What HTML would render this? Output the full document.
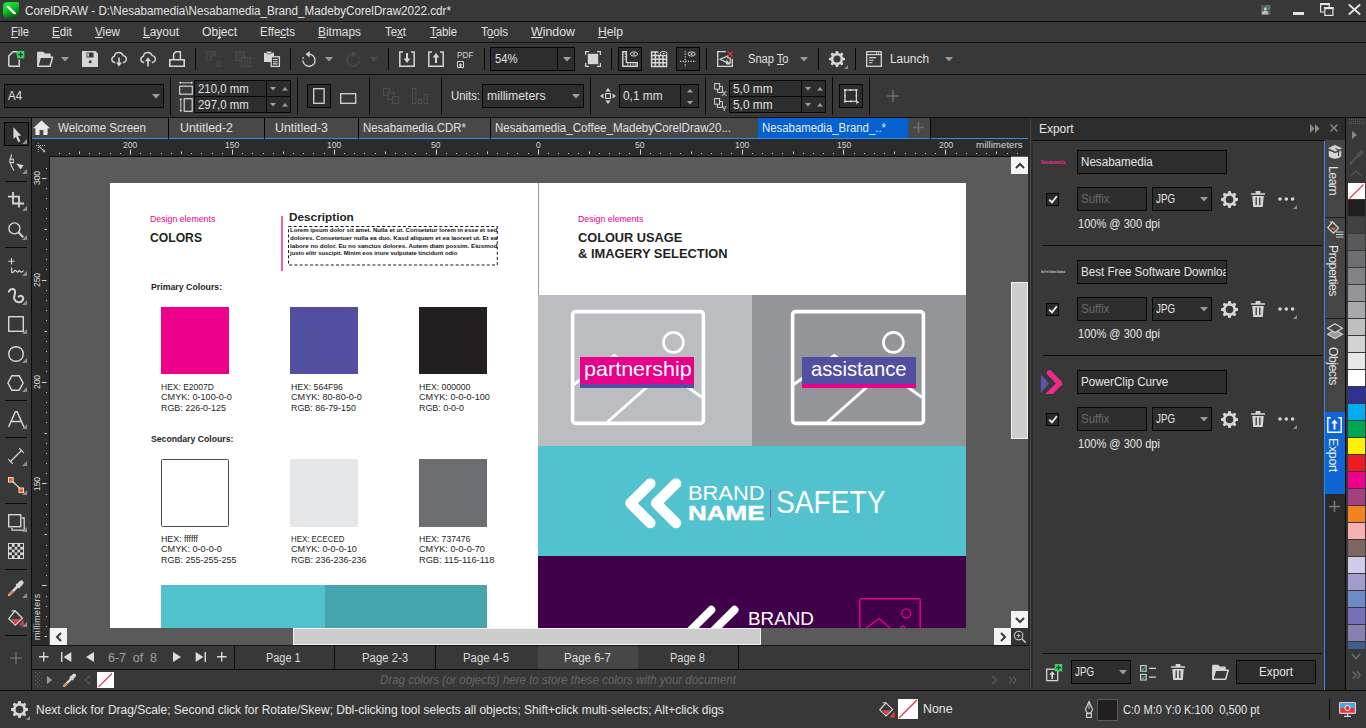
<!DOCTYPE html>
<html lang="en"><head><meta charset="utf-8"><title>CorelDRAW</title>
<style>
html,body{margin:0;padding:0;background:#383838;}
body{width:1366px;height:728px;position:relative;overflow:hidden;font-family:"Liberation Sans",sans-serif;font-size:12px;color:#dcdcdc;}
div,span.t,svg.i{position:absolute;box-sizing:content-box;}
span.t{white-space:pre;display:block;}
u{text-decoration:underline;text-underline-offset:1px;}
svg.i{overflow:visible;}
.clip{overflow:hidden;}
</style></head><body>
<div style="left:0px;top:0px;width:1366px;height:21px;background:#383838;"></div>
<div style="left:0px;top:21px;width:1366px;height:1px;background:#060606;"></div>
<svg class="i" style="left:3px;top:2px;" width="16" height="16" viewBox="0 0 16 16"><defs><linearGradient id="gi" x1="0.1" y1="0" x2="0.6" y2="1"><stop offset="0" stop-color="#10f23a"/><stop offset="0.45" stop-color="#12c82e"/><stop offset="1" stop-color="#035c10"/></linearGradient></defs>
<path d="M4.500 0H15Q16 0 16 1V10.500Q16 16 10.500 16H4Q0 16 0 12V4.500Q0 0 4.500 0Z" fill="url(#gi)"/>
<path d="M4.600 3.400L13 11.400" stroke="#0a5a16" stroke-width="2.600" stroke-linecap="round" opacity="0.550" transform="translate(0.300 1)"/>
<path d="M4 3.800L12 11.600" stroke="#f6fff6" stroke-width="2.500" stroke-linecap="butt"/><path d="M12.700 12.400L11.300 10.800L12.800 11L13.300 12.600Z" fill="#e0f0e0"/></svg>
<span class="t" style="left:24.5px;top:3.5px;font-size:12px;line-height:15px;color:#e4e4e4;transform-origin:0 50%;transform:scaleX(0.9717);">CorelDRAW - D:\Nesabamedia\Nesabamedia_Brand_MadebyCorelDraw2022.cdr*</span>
<svg class="i" style="left:1261px;top:4.8px;" width="9.5" height="9.5" viewBox="0 0 9.5 9.5"><rect x="0" y="0" width="9.500" height="9.500" fill="#5a5a5a"/><circle cx="4.200" cy="3.800" r="1.500" fill="#c8c8c8"/><path d="M0.800 9.500C0.800 6.400 2.600 5.600 4.200 5.600C5.800 5.600 7.600 6.400 7.600 9.500Z" fill="#bdbdbd"/><circle cx="7" cy="2.300" r="1.700" fill="none" stroke="#22c55e" stroke-width="0.900"/></svg>
<div style="left:1293px;top:12px;width:11px;height:3.2px;background:#e4e4e4;"></div>
<svg class="i" style="left:1320px;top:3px;" width="13.5" height="13" viewBox="0 0 13.5 13"><path d="M0.600 0.600H9.200V4.200M4.200 9H0.600V0.600" fill="none" stroke="#e4e4e4" stroke-width="1.200"/><path d="M0 1.100H9.800" stroke="#e4e4e4" stroke-width="2"/><rect x="4.800" y="4.600" width="8.100" height="7.800" fill="#383838" stroke="#e4e4e4" stroke-width="1.200"/><path d="M4.200 5.200H13.500" stroke="#e4e4e4" stroke-width="2"/></svg>
<svg class="i" style="left:1348px;top:4px;" width="13" height="11" viewBox="0 0 13 11"><path d="M0.800 0.500L12.200 10.500M12.200 0.500L0.800 10.500" stroke="#e4e4e4" stroke-width="1.800" fill="none"/></svg>
<div style="left:0px;top:22px;width:1366px;height:20px;background:#383838;"></div>
<div style="left:0px;top:42px;width:1366px;height:1px;background:#101010;"></div>
<span class="t" style="left:11px;top:24.5px;font-size:12px;line-height:15px;color:#e0e0e0;transform-origin:0 50%;transform:scaleX(0.9310);">File</span>
<div style="left:11.0px;top:37px;width:6.8px;height:1px;background:#e0e0e0;"></div>
<span class="t" style="left:52px;top:24.5px;font-size:12px;line-height:15px;color:#e0e0e0;transform-origin:0 50%;transform:scaleX(0.9672);">Edit</span>
<div style="left:52.0px;top:37px;width:7.7px;height:1px;background:#e0e0e0;"></div>
<span class="t" style="left:95px;top:24.5px;font-size:12px;line-height:15px;color:#e0e0e0;transform-origin:0 50%;transform:scaleX(0.9693);">View</span>
<div style="left:95.0px;top:37px;width:7.8px;height:1px;background:#e0e0e0;"></div>
<span class="t" style="left:143px;top:24.5px;font-size:12px;line-height:15px;color:#e0e0e0;transform-origin:0 50%;transform:scaleX(0.9993);">Layout</span>
<div style="left:143.0px;top:37px;width:6.7px;height:1px;background:#e0e0e0;"></div>
<span class="t" style="left:202px;top:24.5px;font-size:12px;line-height:15px;color:#e0e0e0;transform-origin:0 50%;transform:scaleX(1.0092);">Object</span>
<div style="left:218.2px;top:37px;width:2.7px;height:1px;background:#e0e0e0;"></div>
<span class="t" style="left:260px;top:24.5px;font-size:12px;line-height:15px;color:#e0e0e0;transform-origin:0 50%;transform:scaleX(0.9599);">Effects</span>
<div style="left:280.3px;top:37px;width:5.8px;height:1px;background:#e0e0e0;"></div>
<span class="t" style="left:318px;top:24.5px;font-size:12px;line-height:15px;color:#e0e0e0;transform-origin:0 50%;transform:scaleX(0.9920);">Bitmaps</span>
<div style="left:318.0px;top:37px;width:7.9px;height:1px;background:#e0e0e0;"></div>
<span class="t" style="left:385px;top:24.5px;font-size:12px;line-height:15px;color:#e0e0e0;transform-origin:0 50%;transform:scaleX(0.9542);">Text</span>
<div style="left:397.1px;top:37px;width:5.7px;height:1px;background:#e0e0e0;"></div>
<span class="t" style="left:430px;top:24.5px;font-size:12px;line-height:15px;color:#e0e0e0;transform-origin:0 50%;transform:scaleX(0.9412);">Table</span>
<div style="left:430.0px;top:37px;width:6.9px;height:1px;background:#e0e0e0;"></div>
<span class="t" style="left:481px;top:24.5px;font-size:12px;line-height:15px;color:#e0e0e0;transform-origin:0 50%;transform:scaleX(0.9639);">Tools</span>
<div style="left:488.1px;top:37px;width:6.4px;height:1px;background:#e0e0e0;"></div>
<span class="t" style="left:531px;top:24.5px;font-size:12px;line-height:15px;color:#e0e0e0;transform-origin:0 50%;transform:scaleX(1.0310);">Window</span>
<div style="left:531.0px;top:37px;width:11.7px;height:1px;background:#e0e0e0;"></div>
<span class="t" style="left:598px;top:24.5px;font-size:12px;line-height:15px;color:#e0e0e0;transform-origin:0 50%;transform:scaleX(1.0130);">Help</span>
<div style="left:598.0px;top:37px;width:8.8px;height:1px;background:#e0e0e0;"></div>
<div style="left:0px;top:43px;width:1366px;height:31px;background:#383838;"></div>
<div style="left:0px;top:74px;width:1366px;height:1px;background:#101010;"></div>
<svg class="i" style="left:8px;top:51px;" width="16" height="16" viewBox="0 0 16 16"><path d="M0.8 15.2V5L5 0.8H9.5V4.5M11.2 8.5V15.2H0.8" fill="none" stroke="#d6d6d6" stroke-width="1.5"/><rect x="9" y="0" width="7.300" height="7.300" fill="#35d268"/><path d="M12.650 1.300V6M10.300 3.650H15" stroke="#0c3d18" stroke-width="1.200"/></svg>
<svg class="i" style="left:37px;top:51px;" width="16" height="16" viewBox="0 0 16 16"><path d="M0.8 15V1.5H6L7.5 3.2H13V6" fill="#d6d6d6" stroke="#d6d6d6" stroke-width="1.4" stroke-linejoin="round"/><path d="M3.2 6.2H15.6L13 15.2H0.8Z" fill="#383838" stroke="#d6d6d6" stroke-width="1.5" stroke-linejoin="round"/></svg>
<svg class="i" style="left:61.0px;top:57.25px;" width="8" height="4.5" viewBox="0 0 8 4.5"><path d="M0 0H8L4.0 4.5Z" fill="#9a9a9a"/></svg>
<svg class="i" style="left:82px;top:51px;" width="16" height="16" viewBox="0 0 16 16"><path d="M0 0H13.5L16 2.5V16H0Z" fill="#d6d6d6"/><rect x="4.5" y="1.5" width="7" height="5" fill="#383838"/><rect x="5.3" y="2.2" width="1.6" height="3.4" fill="#d6d6d6"/><circle cx="8.2" cy="10.8" r="1.5" fill="#383838"/></svg>
<svg class="i" style="left:110.5px;top:51px;" width="16" height="16" viewBox="0 0 16 16"><path d="M4.2 11.5H3.6A3.1 3.1 0 0 1 3.3 5.4A4.6 4.6 0 0 1 12.2 4.6A3.5 3.5 0 0 1 12.6 11.5H11.8" fill="none" stroke="#d6d6d6" stroke-width="1.4"/><path d="M8 6.5V13" stroke="#d6d6d6" stroke-width="1.6"/><path d="M5 11.5H11L8 15.5Z" fill="#d6d6d6"/></svg>
<svg class="i" style="left:140px;top:51px;" width="16" height="16" viewBox="0 0 16 16"><path d="M4.2 11.5H3.6A3.1 3.1 0 0 1 3.3 5.4A4.6 4.6 0 0 1 12.2 4.6A3.5 3.5 0 0 1 12.6 11.5H11.8" fill="none" stroke="#d6d6d6" stroke-width="1.4"/><path d="M8 9V15.5" stroke="#d6d6d6" stroke-width="1.6"/><path d="M5 10.3H11L8 6.3Z" fill="#d6d6d6"/></svg>
<svg class="i" style="left:169px;top:51px;" width="16" height="16" viewBox="0 0 16 16"><path d="M4.600 9V3L6.600 0.800H11.400V9" fill="none" stroke="#d6d6d6" stroke-width="1.500"/><path d="M0.8 8.8H15.2V15.2H0.8Z" fill="none" stroke="#d6d6d6" stroke-width="1.6"/></svg>
<div style="left:195px;top:48px;width:1px;height:22px;background:#070707;"></div>
<svg class="i" style="left:206px;top:51px;" width="16" height="16" viewBox="0 0 16 16"><path d="M0.6 0.6H9V5H4.8V9H0.6Z M0.6 3H9" fill="none" stroke="#4b4b4b" stroke-width="1.1"/><path d="M10.5 10.5H15.4V15.4H10.5Z M12 12.5H14M12 14H14" fill="none" stroke="#4b4b4b" stroke-width="0.9"/></svg>
<svg class="i" style="left:235px;top:51px;" width="16" height="16" viewBox="0 0 16 16"><path d="M0.6 0.6H9.4V9.4H0.6Z" fill="none" stroke="#4b4b4b" stroke-width="1.1"/><path d="M2.5 3H7.5M2.5 5H7.5M2.5 7H7.5" stroke="#4b4b4b" stroke-width="0.8"/><path d="M6.6 6.6H15.4V15.4H6.6Z" fill="#383838" stroke="#4b4b4b" stroke-width="1.1"/><path d="M8.5 9H13.5M8.5 11H13.5M8.5 13H13.5" stroke="#4b4b4b" stroke-width="0.8"/></svg>
<svg class="i" style="left:264px;top:51px;" width="16" height="16" viewBox="0 0 16 16"><path d="M0 1.8H10V11H0Z" fill="#d6d6d6"/><rect x="2.5" y="0.3" width="5" height="2.6" rx="1" fill="#d6d6d6" stroke="#383838" stroke-width="0.6"/><rect x="7.2" y="5.8" width="8.2" height="9.6" fill="#383838" stroke="#d6d6d6" stroke-width="1.3"/><path d="M9 8.5H13.6M9 10.7H13.6M9 12.9H13.6" stroke="#d6d6d6" stroke-width="1.1"/></svg>
<div style="left:290px;top:48px;width:1px;height:22px;background:#070707;"></div>
<svg class="i" style="left:301px;top:51px;" width="16" height="16" viewBox="0 0 16 16"><path d="M8 3.2A6 6 0 1 1 2.3 11" fill="none" stroke="#d6d6d6" stroke-width="1.4"/><path d="M2.3 11A6 6 0 0 1 2.6 6" fill="none" stroke="#d6d6d6" stroke-width="1.4" stroke-dasharray="1.6 1.6"/><path d="M8.6 0V6.4L4.6 3.2Z" fill="#d6d6d6"/></svg>
<svg class="i" style="left:325.0px;top:57.25px;" width="8" height="4.5" viewBox="0 0 8 4.5"><path d="M0 0H8L4.0 4.5Z" fill="#9a9a9a"/></svg>
<svg class="i" style="left:345px;top:51px;" width="16" height="16" viewBox="0 0 16 16"><path d="M8 3.2A6 6 0 1 0 13.7 11" fill="none" stroke="#4b4b4b" stroke-width="1.4"/><path d="M13.7 11A6 6 0 0 0 13.4 6" fill="none" stroke="#4b4b4b" stroke-width="1.4" stroke-dasharray="1.6 1.6"/><path d="M7.4 0V6.4L11.4 3.2Z" fill="#4b4b4b"/></svg>
<svg class="i" style="left:370.0px;top:57.25px;" width="8" height="4.5" viewBox="0 0 8 4.5"><path d="M0 0H8L4.0 4.5Z" fill="#4e4e4e"/></svg>
<div style="left:388px;top:48px;width:1px;height:22px;background:#070707;"></div>
<svg class="i" style="left:399px;top:51px;" width="16" height="16" viewBox="0 0 16 16"><path d="M4 1H0.8V15.2H15.2V1H12" fill="none" stroke="#d6d6d6" stroke-width="1.5"/><path d="M8 2V9" stroke="#d6d6d6" stroke-width="2"/><path d="M4.6 7.6H11.4L8 12Z" fill="#d6d6d6"/></svg>
<svg class="i" style="left:428px;top:51px;" width="16" height="16" viewBox="0 0 16 16"><path d="M4 1H0.8V15.2H15.2V1H12" fill="none" stroke="#d6d6d6" stroke-width="1.5"/><path d="M8 5V12" stroke="#d6d6d6" stroke-width="2"/><path d="M4.6 6.4H11.4L8 2Z" fill="#d6d6d6"/></svg>
<span class="t" style="left:456.5px;top:50.8px;font-size:8.2px;line-height:10px;color:#d6d6d6;transform-origin:0 50%;transform:scaleX(1.0061);">PDF</span>
<svg class="i" style="left:457px;top:60.5px;" width="8" height="7" viewBox="0 0 8 7"><path d="M0.5 0.5H6.5V6.5H0.5Z" fill="none" stroke="#d6d6d6" stroke-width="1"/><path d="M3.5 2L1.6 4.4H2.8V6H4.2V4.4H5.4Z" fill="#d6d6d6"/></svg>
<div style="left:483.5px;top:48px;width:1px;height:22px;background:#070707;"></div>
<div style="left:490px;top:47px;width:83px;height:22px;background:#2d2d2d;border:1px solid #070707;"></div>
<div style="left:557px;top:48px;width:1px;height:22px;background:#070707;"></div>
<span class="t" style="left:494.5px;top:51.5px;font-size:12px;line-height:15px;color:#e0e0e0;transform-origin:0 50%;transform:scaleX(0.9368);">54%</span>
<svg class="i" style="left:562.5px;top:56.75px;" width="8" height="4.5" viewBox="0 0 8 4.5"><path d="M0 0H8L4.0 4.5Z" fill="#a0a0a0"/></svg>
<svg class="i" style="left:585px;top:51px;" width="16" height="16" viewBox="0 0 16 16"><path d="M0.6 4V0.6H4M12 0.6H15.4V4M15.4 12V15.4H12M4 15.4H0.6V12" fill="none" stroke="#d6d6d6" stroke-width="1.2"/><rect x="2.8" y="2.8" width="10.4" height="10.4" fill="#d6d6d6"/></svg>
<div style="left:611px;top:48px;width:1px;height:22px;background:#070707;"></div>
<div style="left:618px;top:47px;width:22px;height:22px;background:#2d2d2d;border:1px solid #050505;"></div>
<svg class="i" style="left:622px;top:51px;" width="16" height="16" viewBox="0 0 16 16"><path d="M0.8 0.8H4.4V11.6H15.2V15.2H0.8Z" fill="none" stroke="#d6d6d6" stroke-width="1.4"/><path d="M2.5 3H4M2.5 5.5H4M2.5 8H4M6 12.5V14M8.5 12.5V14M11 12.5V14M13.3 12.5V14" stroke="#d6d6d6" stroke-width="0.9"/><ellipse cx="12" cy="3" rx="3.6" ry="2.1" fill="none" stroke="#d6d6d6" stroke-width="1"/><circle cx="12" cy="3" r="0.9" fill="#d6d6d6"/></svg>
<svg class="i" style="left:651px;top:51px;" width="17" height="16" viewBox="0 0 17 16"><path d="M0 1H7.5M0 4.6H16M0 8.2H16M0 11.8H16M0 15.4H16M0.6 0.5V16M4.4 0.5V16M8.2 4.5V16M12 4.5V16M15.6 4.5V16" fill="none" stroke="#d6d6d6" stroke-width="1.5"/><ellipse cx="12.6" cy="2.6" rx="3.6" ry="2.1" fill="#383838" stroke="#d6d6d6" stroke-width="1"/><circle cx="12.6" cy="2.6" r="0.9" fill="#d6d6d6"/></svg>
<div style="left:676px;top:47px;width:22px;height:22px;background:#2d2d2d;border:1px solid #050505;"></div>
<svg class="i" style="left:680px;top:51px;" width="16" height="16" viewBox="0 0 16 16"><path d="M5.2 0V16" stroke="#d6d6d6" stroke-width="1.1" stroke-dasharray="1.2 1.4"/><path d="M0 10.4H16" stroke="#d6d6d6" stroke-width="1.1" stroke-dasharray="1.2 1.4"/><ellipse cx="11.6" cy="3" rx="3.6" ry="2.1" fill="none" stroke="#d6d6d6" stroke-width="1"/><circle cx="11.6" cy="3" r="0.9" fill="#d6d6d6"/></svg>
<div style="left:706px;top:48px;width:1px;height:22px;background:#070707;"></div>
<svg class="i" style="left:717px;top:51px;" width="17" height="16" viewBox="0 0 17 16"><path d="M9 0.7H0.7V15.3H15.3V8" fill="none" stroke="#d6d6d6" stroke-width="1.3"/><path d="M3.2 8.2L10.8 5V7H13.2V12.2H9.4V11.4Z" fill="none" stroke="#d6d6d6" stroke-width="1.2"/><path d="M9.4 8.4L13.4 13.4L9.4 13.4Z" fill="#d6d6d6"/><path d="M10.6 0.4L15.8 5.6M15.8 0.4L10.6 5.6" stroke="#e8323c" stroke-width="1.3"/></svg>
<span class="t" style="left:748px;top:51.5px;font-size:12px;line-height:15px;color:#e0e0e0;transform-origin:0 50%;transform:scaleX(0.9244);">Snap To</span>
<div style="left:777.0px;top:64px;width:6.8px;height:1px;background:#e0e0e0;"></div>
<svg class="i" style="left:799.5px;top:56.75px;" width="8" height="4.5" viewBox="0 0 8 4.5"><path d="M0 0H8L4.0 4.5Z" fill="#9a9a9a"/></svg>
<div style="left:818px;top:48px;width:1px;height:22px;background:#070707;"></div>
<svg class="i" style="left:829px;top:51px;" width="16" height="16" viewBox="0 0 16 16"><path d="M6.9 0H9.1L9.6 2.1L11 2.7L12.9 1.6L14.4 3.1L13.3 5L13.9 6.4L16 6.9V9.1L13.9 9.6L13.3 11L14.4 12.9L12.9 14.4L11 13.3L9.6 13.9L9.1 16H6.9L6.4 13.9L5 13.3L3.1 14.4L1.6 12.9L2.7 11L2.1 9.6L0 9.1V6.9L2.1 6.4L2.7 5L1.6 3.1L3.1 1.6L5 2.7L6.4 2.1Z" fill="#d6d6d6"/><circle cx="8" cy="8" r="3.6" fill="#383838"/></svg>
<svg class="i" style="left:843.5px;top:65px;" width="4" height="4" viewBox="0 0 4 4"><path d="M4 0V4H0Z" fill="#8a8a8a"/></svg>
<div style="left:855px;top:48px;width:1px;height:22px;background:#070707;"></div>
<svg class="i" style="left:866px;top:51px;" width="16" height="16" viewBox="0 0 16 16"><rect x="0.7" y="0.7" width="14.6" height="14.6" fill="none" stroke="#d6d6d6" stroke-width="1.3"/><path d="M0.7 3.6H15.3" stroke="#d6d6d6" stroke-width="1.2"/><path d="M3 6.6H10M3 9.2H7.6M3 11.8H6.4" stroke="#d6d6d6" stroke-width="1.1"/><path d="M10.6 1.4V3M12.4 1.4V3" stroke="#d6d6d6" stroke-width="0.8"/></svg>
<span class="t" style="left:890px;top:51.5px;font-size:12px;line-height:15px;color:#e0e0e0;transform-origin:0 50%;transform:scaleX(0.9907);">Launch</span>
<svg class="i" style="left:945.0px;top:56.75px;" width="8" height="4.5" viewBox="0 0 8 4.5"><path d="M0 0H8L4.0 4.5Z" fill="#9a9a9a"/></svg>
<div style="left:0px;top:75px;width:1366px;height:42px;background:#383838;"></div>
<div style="left:0px;top:117px;width:1366px;height:1px;background:#101010;"></div>
<div style="left:4px;top:84px;width:158px;height:22px;background:#2d2d2d;border:1px solid #070707;"></div>
<span class="t" style="left:8px;top:88.5px;font-size:12px;line-height:15px;color:#e0e0e0;transform-origin:0 50%;transform:scaleX(0.9538);">A4</span>
<svg class="i" style="left:151.5px;top:93.75px;" width="8" height="4.5" viewBox="0 0 8 4.5"><path d="M0 0H8L4.0 4.5Z" fill="#a0a0a0"/></svg>
<div style="left:170px;top:77px;width:1px;height:38px;background:#070707;"></div>
<svg class="i" style="left:179px;top:81px;" width="14" height="14" viewBox="0 0 14 14"><path d="M0.5 1.8H13.5" stroke="#d6d6d6" stroke-width="0.9"/><path d="M0 1.8L2 0.6V3ZM14 1.8L12 0.6V3Z" fill="#d6d6d6"/><rect x="0.7" y="5.2" width="12.6" height="8" fill="none" stroke="#d6d6d6" stroke-width="1.2"/></svg>
<svg class="i" style="left:179px;top:97.5px;" width="14" height="14" viewBox="0 0 14 14"><path d="M1.8 0.5V13.5" stroke="#d6d6d6" stroke-width="0.9"/><path d="M1.8 0L0.6 2H3ZM1.8 14L0.6 12H3Z" fill="#d6d6d6"/><rect x="5.2" y="0.7" width="8" height="12.6" fill="none" stroke="#d6d6d6" stroke-width="1.2"/></svg>
<div style="left:194px;top:80px;width:95px;height:15px;background:#2d2d2d;border:1px solid #070707;"></div>
<div style="left:194px;top:96px;width:95px;height:15px;background:#2d2d2d;border:1px solid #070707;"></div>
<div style="left:266px;top:81px;width:1px;height:15px;background:#070707;"></div>
<div style="left:266px;top:97px;width:1px;height:15px;background:#070707;"></div>
<span class="t" style="left:198px;top:81.5px;font-size:12px;line-height:15px;color:#e0e0e0;transform-origin:0 50%;transform:scaleX(0.9500);">210,0 mm</span>
<span class="t" style="left:198px;top:97.5px;font-size:12px;line-height:15px;color:#e0e0e0;transform-origin:0 50%;transform:scaleX(0.9500);">297,0 mm</span>
<svg class="i" style="left:270.0px;top:87.0px;" width="6" height="3.4" viewBox="0 0 6 3.4"><path d="M0 0H6L3.0 3.4Z" fill="#a0a0a0"/></svg>
<svg class="i" style="left:282.0px;top:87.0px;" width="6" height="3.4" viewBox="0 0 6 3.4"><path d="M0 3.4H6L3.0 0Z" fill="#a0a0a0"/></svg>
<svg class="i" style="left:270.0px;top:102.6px;" width="6" height="3.4" viewBox="0 0 6 3.4"><path d="M0 0H6L3.0 3.4Z" fill="#a0a0a0"/></svg>
<svg class="i" style="left:282.0px;top:102.6px;" width="6" height="3.4" viewBox="0 0 6 3.4"><path d="M0 3.4H6L3.0 0Z" fill="#a0a0a0"/></svg>
<div style="left:297px;top:77px;width:1px;height:38px;background:#070707;"></div>
<div style="left:307px;top:84px;width:22px;height:22px;background:#2d2d2d;border:1px solid #050505;"></div>
<svg class="i" style="left:312.5px;top:88px;" width="12" height="16" viewBox="0 0 12 16"><rect x="0.7" y="0.7" width="10.4" height="14.6" fill="none" stroke="#d6d6d6" stroke-width="1.3"/></svg>
<svg class="i" style="left:339.5px;top:93px;" width="17" height="11" viewBox="0 0 17 11"><rect x="0.7" y="0.7" width="15" height="9.6" fill="none" stroke="#d6d6d6" stroke-width="1.3"/></svg>
<div style="left:369px;top:77px;width:1px;height:38px;background:#070707;"></div>
<svg class="i" style="left:383px;top:88px;" width="16" height="16" viewBox="0 0 16 16"><rect x="0.5" y="0.5" width="6" height="7" fill="none" stroke="#4f4f4f"/><rect x="5" y="4.5" width="6" height="7" fill="#383838" stroke="#4f4f4f"/><rect x="9.5" y="8.5" width="6" height="7" fill="#383838" stroke="#4f4f4f"/></svg>
<svg class="i" style="left:412px;top:88px;" width="16" height="16" viewBox="0 0 16 16"><rect x="0.5" y="0.5" width="3.4" height="15" fill="none" stroke="#4f4f4f"/><rect x="6.5" y="11.5" width="3" height="4" fill="none" stroke="#4f4f4f"/><rect x="12" y="6.5" width="3.4" height="9" fill="none" stroke="#4f4f4f"/></svg>
<div style="left:441px;top:77px;width:1px;height:38px;background:#070707;"></div>
<span class="t" style="left:450.5px;top:88.5px;font-size:12px;line-height:15px;color:#e0e0e0;transform-origin:0 50%;transform:scaleX(0.9455);">Units:</span>
<div style="left:482px;top:84px;width:100px;height:22px;background:#2d2d2d;border:1px solid #070707;"></div>
<span class="t" style="left:486.5px;top:88.5px;font-size:12px;line-height:15px;color:#e0e0e0;transform-origin:0 50%;transform:scaleX(1.0204);">millimeters</span>
<svg class="i" style="left:571.5px;top:93.75px;" width="8" height="4.5" viewBox="0 0 8 4.5"><path d="M0 0H8L4.0 4.5Z" fill="#a0a0a0"/></svg>
<div style="left:590px;top:77px;width:1px;height:38px;background:#070707;"></div>
<svg class="i" style="left:599.5px;top:88px;" width="16" height="16" viewBox="0 0 16 16"><rect x="5.6" y="5.6" width="4.8" height="4.8" fill="none" stroke="#d6d6d6" stroke-width="1.1"/><path d="M8 0L10.6 3.4H5.4ZM8 16L10.6 12.600H5.4ZM0 8L3.4 5.4V10.6ZM16 8L12.6 5.4V10.6Z" fill="#d6d6d6"/></svg>
<div style="left:618.5px;top:84px;width:78.5px;height:22px;background:#2d2d2d;border:1px solid #070707;"></div>
<div style="left:680px;top:85px;width:1px;height:22px;background:#070707;"></div>
<span class="t" style="left:623px;top:88.5px;font-size:12px;line-height:15px;color:#e0e0e0;transform-origin:0 50%;transform:scaleX(0.9874);">0,1 mm</span>
<svg class="i" style="left:686.7px;top:88.8px;" width="6" height="3.4" viewBox="0 0 6 3.4"><path d="M0 3.4H6L3.0 0Z" fill="#a0a0a0"/></svg>
<svg class="i" style="left:686.7px;top:100.8px;" width="6" height="3.4" viewBox="0 0 6 3.4"><path d="M0 0H6L3.0 3.4Z" fill="#a0a0a0"/></svg>
<div style="left:705px;top:77px;width:1px;height:38px;background:#070707;"></div>
<svg class="i" style="left:713.5px;top:82.5px;" width="14" height="13" viewBox="0 0 14 13"><rect x="0.6" y="0.6" width="5" height="5.6" fill="none" stroke="#d6d6d6" stroke-width="1"/><path d="M3.4 6.2V9.4H8.4V3.4H5.6" fill="none" stroke="#d6d6d6" stroke-width="1"/></svg>
<span class="t" style="left:721.5px;top:88.5px;font-size:8px;line-height:10px;color:#e6e6e6;">X</span>
<svg class="i" style="left:713.5px;top:98px;" width="14" height="13" viewBox="0 0 14 13"><rect x="0.6" y="0.6" width="5" height="5.6" fill="none" stroke="#d6d6d6" stroke-width="1"/><path d="M3.4 6.2V9.4H8.4V3.4H5.6" fill="none" stroke="#d6d6d6" stroke-width="1"/></svg>
<span class="t" style="left:721.5px;top:104.0px;font-size:8px;line-height:10px;color:#e6e6e6;">Y</span>
<div style="left:729px;top:80px;width:95px;height:15px;background:#2d2d2d;border:1px solid #070707;"></div>
<div style="left:729px;top:96px;width:95px;height:15px;background:#2d2d2d;border:1px solid #070707;"></div>
<div style="left:801px;top:81px;width:1px;height:15px;background:#070707;"></div>
<div style="left:801px;top:97px;width:1px;height:15px;background:#070707;"></div>
<span class="t" style="left:733.3px;top:81.5px;font-size:12px;line-height:15px;color:#e0e0e0;transform-origin:0 50%;transform:scaleX(0.9874);">5,0 mm</span>
<span class="t" style="left:733.3px;top:97.5px;font-size:12px;line-height:15px;color:#e0e0e0;transform-origin:0 50%;transform:scaleX(0.9874);">5,0 mm</span>
<svg class="i" style="left:804.7px;top:87.0px;" width="6" height="3.4" viewBox="0 0 6 3.4"><path d="M0 0H6L3.0 3.4Z" fill="#a0a0a0"/></svg>
<svg class="i" style="left:816.7px;top:87.0px;" width="6" height="3.4" viewBox="0 0 6 3.4"><path d="M0 3.4H6L3.0 0Z" fill="#a0a0a0"/></svg>
<svg class="i" style="left:804.7px;top:102.6px;" width="6" height="3.4" viewBox="0 0 6 3.4"><path d="M0 0H6L3.0 3.4Z" fill="#a0a0a0"/></svg>
<svg class="i" style="left:816.7px;top:102.6px;" width="6" height="3.4" viewBox="0 0 6 3.4"><path d="M0 3.4H6L3.0 0Z" fill="#a0a0a0"/></svg>
<div style="left:832px;top:77px;width:1px;height:38px;background:#070707;"></div>
<div style="left:838.5px;top:84px;width:22.5px;height:22px;background:#2d2d2d;border:1px solid #050505;"></div>
<svg class="i" style="left:842.5px;top:87.5px;" width="17" height="17" viewBox="0 0 17 17"><rect x="2" y="2" width="11.4" height="11.4" fill="none" stroke="#d6d6d6" stroke-width="1.2"/><path d="M1 1H3V3H1ZM12.4 1H14.4V3H12.4ZM1 12.4H3V14.4H1ZM6.7 1.2H8.7V2.8H6.7ZM6.7 12.600H8.7V14.2H6.7ZM1.2 6.7H2.8V8.7H1.2ZM12.600 6.7H14.2V8.7H12.600Z" fill="#d6d6d6"/><path d="M12.8 11.2L16.4 15L14.4 15L13.6 16.8Z" fill="#d6d6d6"/></svg>
<div style="left:869px;top:77px;width:1px;height:38px;background:#070707;"></div>
<svg class="i" style="left:887px;top:90px;" width="12" height="12" viewBox="0 0 12 12"><path d="M6 0V12M0 6H12" stroke="#6a6a6a" stroke-width="1.6"/></svg>
<div style="left:0px;top:118px;width:31px;height:572px;background:#383838;"></div>
<div style="left:31px;top:118px;width:1px;height:572px;background:#0c0c0c;"></div>
<div style="left:4px;top:122px;width:22.5px;height:21.5px;background:#2d2d2d;border:1px solid #050505;"></div>
<svg class="i" style="left:12.5px;top:126.5px;" width="9" height="16" viewBox="0 0 9 16"><path d="M0.4 0.3L8.2 8.6L5.0 8.9L7.3 14.2L5.2 15.2L3.0 9.8L0.4 12Z" fill="#d6d6d6"/></svg>
<svg class="i" style="left:22px;top:139px;" width="5" height="5" viewBox="0 0 5 5"><path d="M5 0V5H0Z" fill="#8f8f8f"/></svg>
<svg class="i" style="left:9px;top:154px;" width="16" height="18" viewBox="0 0 16 18"><path d="M2.6 0.5C0.6 6 1.6 12 5 16.5" fill="none" stroke="#d6d6d6" stroke-width="1.2"/><rect x="0.9" y="5.2" width="3.4" height="3.4" fill="#383838" stroke="#d6d6d6" stroke-width="1.1"/><path d="M7.2 9.4L14.6 11.2L11.6 15.6Z" fill="#d6d6d6"/></svg>
<svg class="i" style="left:22px;top:169px;" width="5" height="5" viewBox="0 0 5 5"><path d="M5 0V5H0Z" fill="#8f8f8f"/></svg>
<div style="left:5px;top:181px;width:22px;height:1px;background:#0a0a0a;"></div>
<svg class="i" style="left:8px;top:192px;" width="16" height="16" viewBox="0 0 16 16"><path d="M0 4.700H11V15.500M5 0V11.500H16" fill="none" stroke="#d6d6d6" stroke-width="1.800"/></svg>
<svg class="i" style="left:22px;top:206px;" width="5" height="5" viewBox="0 0 5 5"><path d="M5 0V5H0Z" fill="#8f8f8f"/></svg>
<svg class="i" style="left:8px;top:221.5px;" width="16" height="16" viewBox="0 0 16 16"><circle cx="6.4" cy="6.4" r="5.5" fill="none" stroke="#d6d6d6" stroke-width="1.4"/><path d="M10.4 10.4L15.2 15.2" stroke="#d6d6d6" stroke-width="2"/></svg>
<svg class="i" style="left:22px;top:235px;" width="5" height="5" viewBox="0 0 5 5"><path d="M5 0V5H0Z" fill="#8f8f8f"/></svg>
<div style="left:5px;top:247px;width:22px;height:1px;background:#0a0a0a;"></div>
<svg class="i" style="left:8px;top:258px;" width="16" height="16" viewBox="0 0 16 16"><path d="M3.5 0V6.4M0.3 3.2H6.7" stroke="#d6d6d6" stroke-width="1.1"/><path d="M3.6 9.4V14.2C5.4 16 6.2 11.6 7.6 12.4C9 13.2 9.2 15.4 10.6 13.2C11.6 11.6 12.4 14.6 13.4 14.2C14.6 13.700 14.6 12.8 15.6 13.2" fill="none" stroke="#d6d6d6" stroke-width="1.2"/></svg>
<svg class="i" style="left:22px;top:271px;" width="5" height="5" viewBox="0 0 5 5"><path d="M5 0V5H0Z" fill="#8f8f8f"/></svg>
<svg class="i" style="left:8px;top:287.5px;" width="16" height="16" viewBox="0 0 16 16"><path d="M0.8 3.600C2 0.6 6.4 0 7 3.200C7.6 6.4 5.2 8.4 6.4 11.4C7.600 14.6 12.600 15.600 14.6 12.200C16.4 9 13.2 6.4 10.8 8.6" fill="none" stroke="#d6d6d6" stroke-width="2" stroke-linecap="round"/></svg>
<svg class="i" style="left:22px;top:300px;" width="5" height="5" viewBox="0 0 5 5"><path d="M5 0V5H0Z" fill="#8f8f8f"/></svg>
<svg class="i" style="left:8px;top:316px;" width="16" height="16" viewBox="0 0 16 16"><rect x="0.7" y="0.7" width="14.6" height="14.6" fill="none" stroke="#d6d6d6" stroke-width="1.4"/></svg>
<svg class="i" style="left:22px;top:329px;" width="5" height="5" viewBox="0 0 5 5"><path d="M5 0V5H0Z" fill="#8f8f8f"/></svg>
<svg class="i" style="left:8px;top:345.5px;" width="16" height="16" viewBox="0 0 16 16"><circle cx="8" cy="8" r="7.3" fill="none" stroke="#d6d6d6" stroke-width="1.4"/></svg>
<svg class="i" style="left:22px;top:358px;" width="5" height="5" viewBox="0 0 5 5"><path d="M5 0V5H0Z" fill="#8f8f8f"/></svg>
<svg class="i" style="left:7px;top:374.5px;" width="17" height="16" viewBox="0 0 17 16"><path d="M0.9 8L4.8 0.8H12.2L16.1 8L12.2 15.2H4.8Z" fill="none" stroke="#d6d6d6" stroke-width="1.4"/></svg>
<svg class="i" style="left:22px;top:387px;" width="5" height="5" viewBox="0 0 5 5"><path d="M5 0V5H0Z" fill="#8f8f8f"/></svg>
<div style="left:5px;top:400px;width:22px;height:1px;background:#0a0a0a;"></div>
<svg class="i" style="left:7.5px;top:411px;" width="16.5" height="16" viewBox="0 0 16.5 16"><path d="M0.6 16L7.4 0.8H9.1L15.9 16M3.3 10.6H13.2" fill="none" stroke="#d6d6d6" stroke-width="1.5"/></svg>
<svg class="i" style="left:22px;top:424px;" width="5" height="5" viewBox="0 0 5 5"><path d="M5 0V5H0Z" fill="#8f8f8f"/></svg>
<div style="left:5px;top:437px;width:22px;height:1px;background:#0a0a0a;"></div>
<svg class="i" style="left:8px;top:447.5px;" width="16" height="16" viewBox="0 0 16 16"><path d="M2 14L14 2" stroke="#d6d6d6" stroke-width="1.2"/><path d="M0.2 11.2L4.8 15.8M11.2 0.2L15.8 4.8" stroke="#d6d6d6" stroke-width="1.2"/></svg>
<svg class="i" style="left:22px;top:461px;" width="5" height="5" viewBox="0 0 5 5"><path d="M5 0V5H0Z" fill="#8f8f8f"/></svg>
<svg class="i" style="left:8px;top:477px;" width="16" height="16" viewBox="0 0 16 16"><path d="M3 3L13.5 13" stroke="#d6d6d6" stroke-width="1.2"/><rect x="0.5" y="0.500" width="4.600" height="4.600" fill="#ff5a00" stroke="#f0f0f0" stroke-width="0.9"/><rect x="11" y="11" width="4.600" height="4.600" fill="#ff5a00" stroke="#f0f0f0" stroke-width="0.9"/></svg>
<svg class="i" style="left:22px;top:490px;" width="5" height="5" viewBox="0 0 5 5"><path d="M5 0V5H0Z" fill="#8f8f8f"/></svg>
<div style="left:5px;top:503px;width:22px;height:1px;background:#0a0a0a;"></div>
<svg class="i" style="left:8px;top:514px;" width="17" height="17" viewBox="0 0 17 17"><path d="M4 14V16.2H16.2V4H14" fill="none" stroke="#d6d6d6" stroke-width="1.3"/><rect x="0.700" y="0.700" width="12" height="12" fill="#383838" stroke="#d6d6d6" stroke-width="1.400"/></svg>
<svg class="i" style="left:22px;top:527px;" width="5" height="5" viewBox="0 0 5 5"><path d="M5 0V5H0Z" fill="#8f8f8f"/></svg>
<svg class="i" style="left:8px;top:543px;" width="16" height="16" viewBox="0 0 16 16"><rect x="0" y="0" width="16" height="16" fill="#d6d6d6"/><rect x="1.0" y="1.0" width="2.8" height="2.8" fill="#2a2a2a"/><rect x="6.6" y="1.0" width="2.8" height="2.8" fill="#2a2a2a"/><rect x="12.2" y="1.0" width="2.8" height="2.8" fill="#2a2a2a"/><rect x="3.8" y="3.8" width="2.8" height="2.8" fill="#2a2a2a"/><rect x="9.4" y="3.8" width="2.8" height="2.8" fill="#2a2a2a"/><rect x="1.0" y="6.6" width="2.8" height="2.8" fill="#2a2a2a"/><rect x="6.6" y="6.6" width="2.8" height="2.8" fill="#2a2a2a"/><rect x="12.2" y="6.6" width="2.8" height="2.8" fill="#2a2a2a"/><rect x="3.8" y="9.4" width="2.8" height="2.8" fill="#2a2a2a"/><rect x="9.4" y="9.4" width="2.8" height="2.8" fill="#2a2a2a"/><rect x="1.0" y="12.2" width="2.8" height="2.8" fill="#2a2a2a"/><rect x="6.6" y="12.2" width="2.8" height="2.8" fill="#2a2a2a"/><rect x="12.2" y="12.2" width="2.8" height="2.8" fill="#2a2a2a"/></svg>
<div style="left:5px;top:569px;width:22px;height:1px;background:#0a0a0a;"></div>
<svg class="i" style="left:8px;top:580px;" width="16" height="16" viewBox="0 0 16 16"><path d="M1.200 14.8L10 6" stroke="#d6d6d6" stroke-width="2.600" stroke-linecap="round"/><path d="M1.200 14.8L4.600 11.400" stroke="#f26a1b" stroke-width="1.600" stroke-linecap="round"/><path d="M8.200 4.200L11.800 7.800" stroke="#d6d6d6" stroke-width="1.800"/><path d="M10.400 5.600L13.400 2.600" stroke="#d6d6d6" stroke-width="4.400" stroke-linecap="round"/></svg>
<svg class="i" style="left:22px;top:593px;" width="5" height="5" viewBox="0 0 5 5"><path d="M5 0V5H0Z" fill="#8f8f8f"/></svg>
<svg class="i" style="left:8px;top:609.5px;" width="16" height="16" viewBox="0 0 16 16"><path d="M7 0.800L14.400 8.200L7.400 15.200L0.800 8.600Z" fill="none" stroke="#d6d6d6" stroke-width="1.300"/><path d="M7 0.800L3.600 0.800" stroke="#d6d6d6" stroke-width="1.200"/><path d="M3.400 9H12.400L7.400 13.800Z" fill="#ee3b49"/><path d="M15.600 9.800V15.600H10.800Z" fill="#ee3b49"/></svg>
<svg class="i" style="left:22px;top:622px;" width="5" height="5" viewBox="0 0 5 5"><path d="M5 0V5H0Z" fill="#8f8f8f"/></svg>
<div style="left:5px;top:635px;width:22px;height:1px;background:#0a0a0a;"></div>
<svg class="i" style="left:10px;top:652px;" width="12" height="12" viewBox="0 0 12 12"><path d="M6 0V12M0 6H12" stroke="#6a6a6a" stroke-width="1.600"/></svg>
<div style="left:32px;top:118px;width:997px;height:21px;background:#2b2b2b;"></div>
<div style="left:32px;top:118px;width:898px;height:20px;background:#484848;"></div>
<div style="left:32px;top:137.5px;width:997px;height:1.5px;background:#2e8fee;"></div>
<div style="left:168px;top:118px;width:1px;height:21px;background:#050505;"></div>
<div style="left:263.5px;top:118px;width:1px;height:21px;background:#050505;"></div>
<div style="left:358.3px;top:118px;width:1px;height:21px;background:#050505;"></div>
<div style="left:490px;top:118px;width:1px;height:21px;background:#050505;"></div>
<svg class="i" style="left:33px;top:120px;" width="17" height="15" viewBox="0 0 17 15"><path d="M8.500 0.400L17 8.200H14.600V15H10.400V10H6.600V15H2.400V8.200H0Z" fill="#e8e8e8"/></svg>
<span class="t" style="left:58px;top:120.5px;font-size:12px;line-height:15px;color:#e0e0e0;transform-origin:0 50%;transform:scaleX(0.9655);">Welcome Screen</span>
<span class="t" style="left:180px;top:120.5px;font-size:12px;line-height:15px;color:#e0e0e0;transform-origin:0 50%;transform:scaleX(1.0320);">Untitled-2</span>
<span class="t" style="left:275px;top:120.5px;font-size:12px;line-height:15px;color:#e0e0e0;transform-origin:0 50%;transform:scaleX(1.0320);">Untitled-3</span>
<span class="t" style="left:363px;top:120.5px;font-size:12px;line-height:15px;color:#e0e0e0;transform-origin:0 50%;transform:scaleX(0.9533);">Nesabamedia.CDR*</span>
<span class="t" style="left:495px;top:120.5px;font-size:12px;line-height:15px;color:#e0e0e0;transform-origin:0 50%;transform:scaleX(0.9623);">Nesabamedia_Coffee_MadebyCorelDraw20...</span>
<div style="left:758px;top:118px;width:150px;height:20px;background:#0561d0;"></div>
<span class="t" style="left:762px;top:120.5px;font-size:12px;line-height:15px;color:#e6edf7;transform-origin:0 50%;transform:scaleX(0.9484);">Nesabamedia_Brand_..*</span>
<div style="left:929.5px;top:118px;width:1px;height:21px;background:#050505;"></div>
<svg class="i" style="left:913px;top:122px;" width="11" height="11" viewBox="0 0 11 11"><path d="M5.500 0V11M0 5.500H11" stroke="#6e6e6e" stroke-width="1.600"/></svg>
<div style="left:32px;top:139px;width:997px;height:17.5px;background:#2b2b2b;"></div>
<div style="left:32px;top:156px;width:17.5px;height:472px;background:#2b2b2b;"></div>
<div style="left:32px;top:628px;width:17px;height:17px;background:#2b2b2b;"></div>
<div style="left:48.7px;top:156px;width:1.3px;height:489px;background:#0c0c0c;"></div>
<div style="left:49px;top:155.7px;width:980px;height:1.3px;background:#0c0c0c;"></div>
<svg class="i" style="left:36px;top:143px;" width="10" height="10" viewBox="0 0 10 10"><path d="M0 2.500H10M2.300 0V10" stroke="#a8a8a8" stroke-width="1" stroke-dasharray="1 1"/><path d="M2.500 2.700L8 8" stroke="#b8b8b8" stroke-width="1.100"/><rect x="7.200" y="7.200" width="2" height="2" fill="#b8b8b8"/></svg>
<svg class="i" style="left:0px;top:0px;" width="1030" height="156" viewBox="0 0 1030 156"><rect x="59" y="153" width="1" height="1" fill="#c4c4c4"/><rect x="69" y="153" width="1" height="1" fill="#c4c4c4"/><rect x="79" y="151.500" width="1" height="2.500" fill="#cfcfcf"/><rect x="89" y="153" width="1" height="1" fill="#c4c4c4"/><rect x="99" y="153" width="1" height="1" fill="#c4c4c4"/><rect x="110" y="153" width="1" height="1" fill="#c4c4c4"/><rect x="120" y="153" width="1" height="1" fill="#c4c4c4"/><rect x="130" y="149.500" width="1" height="5" fill="#dadada"/><rect x="140" y="153" width="1" height="1" fill="#c4c4c4"/><rect x="150" y="153" width="1" height="1" fill="#c4c4c4"/><rect x="161" y="153" width="1" height="1" fill="#c4c4c4"/><rect x="171" y="153" width="1" height="1" fill="#c4c4c4"/><rect x="181" y="151.500" width="1" height="2.500" fill="#cfcfcf"/><rect x="191" y="153" width="1" height="1" fill="#c4c4c4"/><rect x="201" y="153" width="1" height="1" fill="#c4c4c4"/><rect x="212" y="153" width="1" height="1" fill="#c4c4c4"/><rect x="222" y="153" width="1" height="1" fill="#c4c4c4"/><rect x="232" y="149.500" width="1" height="5" fill="#dadada"/><rect x="242" y="153" width="1" height="1" fill="#c4c4c4"/><rect x="252" y="153" width="1" height="1" fill="#c4c4c4"/><rect x="263" y="153" width="1" height="1" fill="#c4c4c4"/><rect x="273" y="153" width="1" height="1" fill="#c4c4c4"/><rect x="283" y="151.500" width="1" height="2.500" fill="#cfcfcf"/><rect x="293" y="153" width="1" height="1" fill="#c4c4c4"/><rect x="303" y="153" width="1" height="1" fill="#c4c4c4"/><rect x="313" y="153" width="1" height="1" fill="#c4c4c4"/><rect x="324" y="153" width="1" height="1" fill="#c4c4c4"/><rect x="334" y="149.500" width="1" height="5" fill="#dadada"/><rect x="344" y="153" width="1" height="1" fill="#c4c4c4"/><rect x="354" y="153" width="1" height="1" fill="#c4c4c4"/><rect x="364" y="153" width="1" height="1" fill="#c4c4c4"/><rect x="375" y="153" width="1" height="1" fill="#c4c4c4"/><rect x="385" y="151.500" width="1" height="2.500" fill="#cfcfcf"/><rect x="395" y="153" width="1" height="1" fill="#c4c4c4"/><rect x="405" y="153" width="1" height="1" fill="#c4c4c4"/><rect x="415" y="153" width="1" height="1" fill="#c4c4c4"/><rect x="426" y="153" width="1" height="1" fill="#c4c4c4"/><rect x="436" y="149.500" width="1" height="5" fill="#dadada"/><rect x="446" y="153" width="1" height="1" fill="#c4c4c4"/><rect x="456" y="153" width="1" height="1" fill="#c4c4c4"/><rect x="466" y="153" width="1" height="1" fill="#c4c4c4"/><rect x="477" y="153" width="1" height="1" fill="#c4c4c4"/><rect x="487" y="151.500" width="1" height="2.500" fill="#cfcfcf"/><rect x="497" y="153" width="1" height="1" fill="#c4c4c4"/><rect x="507" y="153" width="1" height="1" fill="#c4c4c4"/><rect x="517" y="153" width="1" height="1" fill="#c4c4c4"/><rect x="528" y="153" width="1" height="1" fill="#c4c4c4"/><rect x="538" y="149.500" width="1" height="5" fill="#dadada"/><rect x="548" y="153" width="1" height="1" fill="#c4c4c4"/><rect x="558" y="153" width="1" height="1" fill="#c4c4c4"/><rect x="568" y="153" width="1" height="1" fill="#c4c4c4"/><rect x="578" y="153" width="1" height="1" fill="#c4c4c4"/><rect x="589" y="151.500" width="1" height="2.500" fill="#cfcfcf"/><rect x="599" y="153" width="1" height="1" fill="#c4c4c4"/><rect x="609" y="153" width="1" height="1" fill="#c4c4c4"/><rect x="619" y="153" width="1" height="1" fill="#c4c4c4"/><rect x="629" y="153" width="1" height="1" fill="#c4c4c4"/><rect x="640" y="149.500" width="1" height="5" fill="#dadada"/><rect x="650" y="153" width="1" height="1" fill="#c4c4c4"/><rect x="660" y="153" width="1" height="1" fill="#c4c4c4"/><rect x="670" y="153" width="1" height="1" fill="#c4c4c4"/><rect x="680" y="153" width="1" height="1" fill="#c4c4c4"/><rect x="691" y="151.500" width="1" height="2.500" fill="#cfcfcf"/><rect x="701" y="153" width="1" height="1" fill="#c4c4c4"/><rect x="711" y="153" width="1" height="1" fill="#c4c4c4"/><rect x="721" y="153" width="1" height="1" fill="#c4c4c4"/><rect x="731" y="153" width="1" height="1" fill="#c4c4c4"/><rect x="742" y="149.500" width="1" height="5" fill="#dadada"/><rect x="752" y="153" width="1" height="1" fill="#c4c4c4"/><rect x="762" y="153" width="1" height="1" fill="#c4c4c4"/><rect x="772" y="153" width="1" height="1" fill="#c4c4c4"/><rect x="782" y="153" width="1" height="1" fill="#c4c4c4"/><rect x="793" y="151.500" width="1" height="2.500" fill="#cfcfcf"/><rect x="803" y="153" width="1" height="1" fill="#c4c4c4"/><rect x="813" y="153" width="1" height="1" fill="#c4c4c4"/><rect x="823" y="153" width="1" height="1" fill="#c4c4c4"/><rect x="833" y="153" width="1" height="1" fill="#c4c4c4"/><rect x="843" y="149.500" width="1" height="5" fill="#dadada"/><rect x="854" y="153" width="1" height="1" fill="#c4c4c4"/><rect x="864" y="153" width="1" height="1" fill="#c4c4c4"/><rect x="874" y="153" width="1" height="1" fill="#c4c4c4"/><rect x="884" y="153" width="1" height="1" fill="#c4c4c4"/><rect x="894" y="151.500" width="1" height="2.500" fill="#cfcfcf"/><rect x="905" y="153" width="1" height="1" fill="#c4c4c4"/><rect x="915" y="153" width="1" height="1" fill="#c4c4c4"/><rect x="925" y="153" width="1" height="1" fill="#c4c4c4"/><rect x="935" y="153" width="1" height="1" fill="#c4c4c4"/><rect x="945" y="149.500" width="1" height="5" fill="#dadada"/><rect x="956" y="153" width="1" height="1" fill="#c4c4c4"/><rect x="966" y="153" width="1" height="1" fill="#c4c4c4"/><rect x="976" y="153" width="1" height="1" fill="#c4c4c4"/><rect x="986" y="153" width="1" height="1" fill="#c4c4c4"/><rect x="996" y="151.500" width="1" height="2.500" fill="#cfcfcf"/><rect x="1007" y="153" width="1" height="1" fill="#c4c4c4"/><rect x="1017" y="153" width="1" height="1" fill="#c4c4c4"/></svg>
<span class="t" style="left:123.19812671875006px;top:139.5px;font-size:8.6px;line-height:11px;color:#d8d8d8;transform-origin:0 50%;transform:scaleX(0.9900);">200</span>
<span class="t" style="left:225.1231267187501px;top:139.5px;font-size:8.6px;line-height:11px;color:#d8d8d8;transform-origin:0 50%;transform:scaleX(0.9900);">150</span>
<span class="t" style="left:327.04812671875004px;top:139.5px;font-size:8.6px;line-height:11px;color:#d8d8d8;transform-origin:0 50%;transform:scaleX(0.9900);">100</span>
<span class="t" style="left:431.34041781250005px;top:139.5px;font-size:8.6px;line-height:11px;color:#d8d8d8;transform-origin:0 50%;transform:scaleX(0.9900);">50</span>
<span class="t" style="left:535.63270890625px;top:139.5px;font-size:8.6px;line-height:11px;color:#d8d8d8;transform-origin:0 50%;transform:scaleX(0.9900);">0</span>
<span class="t" style="left:635.1904178125px;top:139.5px;font-size:8.6px;line-height:11px;color:#d8d8d8;transform-origin:0 50%;transform:scaleX(0.9900);">50</span>
<span class="t" style="left:734.74812671875px;top:139.5px;font-size:8.6px;line-height:11px;color:#d8d8d8;transform-origin:0 50%;transform:scaleX(0.9900);">100</span>
<span class="t" style="left:836.6731267187499px;top:139.5px;font-size:8.6px;line-height:11px;color:#d8d8d8;transform-origin:0 50%;transform:scaleX(0.9900);">150</span>
<span class="t" style="left:938.59812671875px;top:139.5px;font-size:8.6px;line-height:11px;color:#d8d8d8;transform-origin:0 50%;transform:scaleX(0.9900);">200</span>
<span class="t" style="left:976.2px;top:139.5px;font-size:8.8px;line-height:11px;color:#d8d8d8;transform-origin:0 50%;transform:scaleX(1.1108);">millimeters</span>
<svg class="i" style="left:0px;top:0px;" width="50" height="646" viewBox="0 0 50 646"><rect x="44.500" y="636" width="2.500" height="1" fill="#cfcfcf"/><rect x="46" y="626" width="1" height="1" fill="#c4c4c4"/><rect x="46" y="616" width="1" height="1" fill="#c4c4c4"/><rect x="46" y="606" width="1" height="1" fill="#c4c4c4"/><rect x="46" y="596" width="1" height="1" fill="#c4c4c4"/><rect x="42" y="585" width="4.500" height="1" fill="#dadada"/><rect x="46" y="575" width="1" height="1" fill="#c4c4c4"/><rect x="46" y="565" width="1" height="1" fill="#c4c4c4"/><rect x="46" y="555" width="1" height="1" fill="#c4c4c4"/><rect x="46" y="545" width="1" height="1" fill="#c4c4c4"/><rect x="44.500" y="534" width="2.500" height="1" fill="#cfcfcf"/><rect x="46" y="524" width="1" height="1" fill="#c4c4c4"/><rect x="46" y="514" width="1" height="1" fill="#c4c4c4"/><rect x="46" y="504" width="1" height="1" fill="#c4c4c4"/><rect x="46" y="494" width="1" height="1" fill="#c4c4c4"/><rect x="42" y="483" width="4.500" height="1" fill="#dadada"/><rect x="46" y="473" width="1" height="1" fill="#c4c4c4"/><rect x="46" y="463" width="1" height="1" fill="#c4c4c4"/><rect x="46" y="453" width="1" height="1" fill="#c4c4c4"/><rect x="46" y="443" width="1" height="1" fill="#c4c4c4"/><rect x="44.500" y="433" width="2.500" height="1" fill="#cfcfcf"/><rect x="46" y="422" width="1" height="1" fill="#c4c4c4"/><rect x="46" y="412" width="1" height="1" fill="#c4c4c4"/><rect x="46" y="402" width="1" height="1" fill="#c4c4c4"/><rect x="46" y="392" width="1" height="1" fill="#c4c4c4"/><rect x="42" y="382" width="4.500" height="1" fill="#dadada"/><rect x="46" y="371" width="1" height="1" fill="#c4c4c4"/><rect x="46" y="361" width="1" height="1" fill="#c4c4c4"/><rect x="46" y="351" width="1" height="1" fill="#c4c4c4"/><rect x="46" y="341" width="1" height="1" fill="#c4c4c4"/><rect x="44.500" y="331" width="2.500" height="1" fill="#cfcfcf"/><rect x="46" y="320" width="1" height="1" fill="#c4c4c4"/><rect x="46" y="310" width="1" height="1" fill="#c4c4c4"/><rect x="46" y="300" width="1" height="1" fill="#c4c4c4"/><rect x="46" y="290" width="1" height="1" fill="#c4c4c4"/><rect x="42" y="280" width="4.500" height="1" fill="#dadada"/><rect x="46" y="269" width="1" height="1" fill="#c4c4c4"/><rect x="46" y="259" width="1" height="1" fill="#c4c4c4"/><rect x="46" y="249" width="1" height="1" fill="#c4c4c4"/><rect x="46" y="239" width="1" height="1" fill="#c4c4c4"/><rect x="44.500" y="229" width="2.500" height="1" fill="#cfcfcf"/><rect x="46" y="218" width="1" height="1" fill="#c4c4c4"/><rect x="46" y="208" width="1" height="1" fill="#c4c4c4"/><rect x="46" y="198" width="1" height="1" fill="#c4c4c4"/><rect x="46" y="188" width="1" height="1" fill="#c4c4c4"/><rect x="42" y="178" width="4.500" height="1" fill="#dadada"/><rect x="46" y="168" width="1" height="1" fill="#c4c4c4"/></svg>
<span class="t" style="left:31.8px;top:184.7px;font-size:8.6px;line-height:11px;color:#d8d8d8;letter-spacing:-0.096px;transform-origin:0 0;transform:rotate(-90deg);">300</span>
<span class="t" style="left:31.8px;top:286.7px;font-size:8.6px;line-height:11px;color:#d8d8d8;letter-spacing:-0.096px;transform-origin:0 0;transform:rotate(-90deg);">250</span>
<span class="t" style="left:31.8px;top:388.6px;font-size:8.6px;line-height:11px;color:#d8d8d8;letter-spacing:-0.096px;transform-origin:0 0;transform:rotate(-90deg);">200</span>
<span class="t" style="left:31.8px;top:490.5px;font-size:8.6px;line-height:11px;color:#d8d8d8;letter-spacing:-0.096px;transform-origin:0 0;transform:rotate(-90deg);">150</span>
<span class="t" style="left:31.8px;top:640.4px;font-size:8.8px;line-height:11px;color:#d8d8d8;letter-spacing:0.423px;transform-origin:0 0;transform:rotate(-90deg);">millimeters</span>
<div class="clip" style="left:50px;top:157px;width:961px;height:471px;background:#5a5a5a;">
<div style="left:59.5px;top:26.4px;width:856.3px;height:460px;background:#ffffff;"></div>
<span class="t" style="left:100.4px;top:57.2px;font-size:8.6px;line-height:11px;color:#ec008c;transform-origin:0 50%;transform:scaleX(1.0195);">Design elements</span>
<span class="t" style="left:100.4px;top:72.5px;font-size:12.8px;line-height:16px;color:#231f20;transform-origin:0 50%;transform:scaleX(0.9497);font-weight:bold;">COLORS</span>
<div style="left:231.4px;top:58.5px;width:1.3px;height:55px;background:#f05fae;"></div>
<span class="t" style="left:238.5px;top:53.0px;font-size:11.5px;line-height:14px;color:#231f20;transform-origin:0 50%;transform:scaleX(1.0244);font-weight:bold;">Description</span>
<svg class="i" style="left:238.4px;top:69px;" width="210" height="40" viewBox="0 0 210 40"><rect x="0.500" y="0.500" width="208.800" height="38.500" fill="none" stroke="#1a1a1a" stroke-width="1" stroke-dasharray="3 2.200"/></svg>
<span class="t" style="left:239.6px;top:70.1px;font-size:5.6px;line-height:7px;color:#111;transform-origin:0 50%;transform:scaleX(1.0843);font-weight:bold;">Lorem ipsum dolor sit amet. Nulla et ut. Consetetur lorem in esse et sed</span>
<span class="t" style="left:239.6px;top:78.1px;font-size:5.6px;line-height:7px;color:#111;transform-origin:0 50%;transform:scaleX(1.1077);font-weight:bold;">dolores. Consetetuer nulla ea duo. Kasd aliquam et ea laoreet ut. Et ea</span>
<span class="t" style="left:239.6px;top:86.2px;font-size:5.6px;line-height:7px;color:#111;transform-origin:0 50%;transform:scaleX(1.1127);font-weight:bold;">labore no dolor. Eu no sanctus dolores. Autem diam possim. Eiusmod</span>
<span class="t" style="left:239.6px;top:93.3px;font-size:5.6px;line-height:7px;color:#111;transform-origin:0 50%;transform:scaleX(1.0536);font-weight:bold;">justo elitr suscipit. Minim eos iriure vulputate tincidunt odio</span>
<span class="t" style="left:101.4px;top:125.0px;font-size:8.4px;line-height:10px;color:#231f20;transform-origin:0 50%;transform:scaleX(1.0462);font-weight:bold;">Primary Colours:</span>
<div style="left:111px;top:150px;width:68px;height:67.3px;background:#ec008c;"></div>
<div style="left:240.3px;top:150px;width:67.6px;height:67.3px;background:#524fa1;"></div>
<div style="left:368.8px;top:150px;width:68px;height:67.3px;background:#231f20;"></div>
<span class="t" style="left:111.4px;top:225.5px;font-size:8.2px;line-height:10px;color:#231f20;transform-origin:0 50%;transform:scaleX(1.0382);">HEX: E2007D</span>
<span class="t" style="left:111.4px;top:235.8px;font-size:8.2px;line-height:10px;color:#231f20;transform-origin:0 50%;transform:scaleX(1.1129);">CMYK: 0-100-0-0</span>
<span class="t" style="left:111.4px;top:246.9px;font-size:8.2px;line-height:10px;color:#231f20;transform-origin:0 50%;transform:scaleX(1.0887);">RGB: 226-0-125</span>
<span class="t" style="left:240.5px;top:225.5px;font-size:8.2px;line-height:10px;color:#231f20;transform-origin:0 50%;transform:scaleX(1.0564);">HEX: 564F96</span>
<span class="t" style="left:240.5px;top:235.8px;font-size:8.2px;line-height:10px;color:#231f20;transform-origin:0 50%;transform:scaleX(1.1129);">CMYK: 80-80-0-0</span>
<span class="t" style="left:240.5px;top:246.9px;font-size:8.2px;line-height:10px;color:#231f20;transform-origin:0 50%;transform:scaleX(1.0887);">RGB: 86-79-150</span>
<span class="t" style="left:369.3px;top:225.5px;font-size:8.2px;line-height:10px;color:#231f20;transform-origin:0 50%;transform:scaleX(1.0558);">HEX: 000000</span>
<span class="t" style="left:369.3px;top:235.8px;font-size:8.2px;line-height:10px;color:#231f20;transform-origin:0 50%;transform:scaleX(1.1129);">CMYK: 0-0-0-100</span>
<span class="t" style="left:369.3px;top:246.9px;font-size:8.2px;line-height:10px;color:#231f20;transform-origin:0 50%;transform:scaleX(1.0852);">RGB: 0-0-0</span>
<span class="t" style="left:101.4px;top:277.0px;font-size:8.4px;line-height:10px;color:#231f20;transform-origin:0 50%;transform:scaleX(1.0349);font-weight:bold;">Secondary Colours:</span>
<div style="left:111px;top:302px;width:66px;height:65.7px;background:#ffffff;border:1px solid #4a4a4a;border-radius:1.5px;"></div>
<div style="left:240.3px;top:302px;width:67.6px;height:67.7px;background:#e6e7e8;"></div>
<div style="left:368.8px;top:302px;width:68px;height:67.7px;background:#6d6e71;"></div>
<span class="t" style="left:111.4px;top:377.5px;font-size:8.2px;line-height:10px;color:#231f20;transform-origin:0 50%;transform:scaleX(1.0774);">HEX: ffffff</span>
<span class="t" style="left:111.4px;top:387.8px;font-size:8.2px;line-height:10px;color:#231f20;transform-origin:0 50%;transform:scaleX(1.1156);">CMYK: 0-0-0-0</span>
<span class="t" style="left:111.4px;top:398.5px;font-size:8.2px;line-height:10px;color:#231f20;transform-origin:0 50%;transform:scaleX(1.0970);">RGB: 255-255-255</span>
<span class="t" style="left:240.5px;top:377.5px;font-size:8.2px;line-height:10px;color:#231f20;transform-origin:0 50%;transform:scaleX(0.9624);">HEX: ECECED</span>
<span class="t" style="left:240.5px;top:387.8px;font-size:8.2px;line-height:10px;color:#231f20;transform-origin:0 50%;transform:scaleX(1.1141);">CMYK: 0-0-0-10</span>
<span class="t" style="left:240.5px;top:398.5px;font-size:8.2px;line-height:10px;color:#231f20;transform-origin:0 50%;transform:scaleX(1.0970);">RGB: 236-236-236</span>
<span class="t" style="left:369.3px;top:377.5px;font-size:8.2px;line-height:10px;color:#231f20;transform-origin:0 50%;transform:scaleX(1.0558);">HEX: 737476</span>
<span class="t" style="left:369.3px;top:387.8px;font-size:8.2px;line-height:10px;color:#231f20;transform-origin:0 50%;transform:scaleX(1.1141);">CMYK: 0-0-0-70</span>
<span class="t" style="left:369.3px;top:398.5px;font-size:8.2px;line-height:10px;color:#231f20;transform-origin:0 50%;transform:scaleX(1.1269);">RGB: 115-116-118</span>
<div style="left:111px;top:428.2px;width:163.5px;height:60px;background:#52c2cf;"></div>
<div style="left:274.5px;top:428.2px;width:162.5px;height:60px;background:#45a5af;"></div>
<div style="left:487.5px;top:26px;width:1px;height:112px;background:#9a9a9a;"></div>
<span class="t" style="left:528.4px;top:57.2px;font-size:8.6px;line-height:11px;color:#ec008c;transform-origin:0 50%;transform:scaleX(1.0226);">Design elements</span>
<span class="t" style="left:528.2px;top:72.7px;font-size:12.6px;line-height:16px;color:#231f20;transform-origin:0 50%;transform:scaleX(1.0136);font-weight:bold;">COLOUR USAGE</span>
<span class="t" style="left:528.2px;top:89.0px;font-size:12.6px;line-height:16px;color:#231f20;transform-origin:0 50%;transform:scaleX(1.0224);font-weight:bold;">&amp; IMAGERY SELECTION</span>
<div style="left:488px;top:138px;width:213.7px;height:152px;background:#bcbdc0;"></div>
<div style="left:701.7px;top:138px;width:214.1px;height:152px;background:#939598;"></div>
<svg class="i" style="left:521.3px;top:153.4px;" width="134" height="115" viewBox="0 0 134 115"><rect x="1.6" y="1.6" width="130.8" height="111.800" rx="3" fill="none" stroke="#fff" stroke-width="3.600"/><circle cx="102.4" cy="32.4" r="10" fill="none" stroke="#fff" stroke-width="2.600"/><path d="M2 75L43.3 45.500L62 59M36.5 112L94.2 61L131 87.4" fill="none" stroke="#fff" stroke-width="3"/></svg>
<div style="left:530.0px;top:200.2px;width:114.3px;height:27px;background:#e9008a;"></div>
<div style="left:530.0px;top:227px;width:114.3px;height:4.1px;background:#524fa1;"></div>
<span class="t" style="left:533.5px;top:199.3px;font-size:21px;line-height:26px;color:#ffffff;transform-origin:0 50%;transform:scaleX(1.0262);">partnership</span>
<svg class="i" style="left:741.3px;top:153.4px;" width="134" height="115" viewBox="0 0 134 115"><rect x="1.6" y="1.6" width="130.8" height="111.800" rx="3" fill="none" stroke="#fff" stroke-width="3.600"/><circle cx="102.4" cy="32.4" r="10" fill="none" stroke="#fff" stroke-width="2.600"/><path d="M2 75L43.3 45.500L62 59M36.5 112L94.2 61L131 87.4" fill="none" stroke="#fff" stroke-width="3"/></svg>
<div style="left:751.6px;top:200.2px;width:114.3px;height:27px;background:#524fa1;"></div>
<div style="left:751.6px;top:227px;width:114.3px;height:4.1px;background:#e9008a;"></div>
<span class="t" style="left:761.25px;top:199.3px;font-size:21px;line-height:26px;color:#ffffff;transform-origin:0 50%;transform:scaleX(0.9626);">assistance</span>
<div style="left:488px;top:289.2px;width:427.8px;height:111px;background:#52c2cf;"></div>
<svg class="i" style="left:570px;top:313px;" width="70" height="66" viewBox="0 0 70 66"><path d="M30.3 13.5L10.5 33.3L30.3 53M56 13.5L36.200 33.3L56 53" fill="none" stroke="#fff" stroke-width="10.5" stroke-linecap="round" stroke-linejoin="round"/></svg>
<span class="t" style="left:638.4px;top:323.8px;font-size:19.6px;line-height:24px;color:#ffffff;transform-origin:0 50%;transform:scaleX(1.1150);">BRAND</span>
<span class="t" style="left:638.4px;top:344.0px;font-size:20px;line-height:25px;color:#ffffff;transform-origin:0 50%;transform:scaleX(1.2991);font-weight:bold;-webkit-text-stroke:0.45px #fff;">NAME</span>
<div style="left:719.6px;top:331.6px;width:1px;height:28px;background:#9b59a8;"></div>
<span class="t" style="left:726.4px;top:325.8px;font-size:31px;line-height:39px;color:#ffffff;transform-origin:0 50%;transform:scaleX(0.9081);">SAFETY</span>
<div style="left:488px;top:399.4px;width:427.8px;height:90px;background:#41004a;"></div>
<svg class="i" style="left:630px;top:443px;" width="70" height="40" viewBox="0 0 70 40"><path d="M31.3 9.8L5 36M54.5 9.8L28.200 36" fill="none" stroke="#fff" stroke-width="8" stroke-linecap="round"/></svg>
<span class="t" style="left:697.6px;top:450.5px;font-size:17.8px;line-height:22px;color:#ffffff;transform-origin:0 50%;transform:scaleX(1.0592);">BRAND</span>
<svg class="i" style="left:809px;top:441.4px;" width="64" height="40" viewBox="0 0 64 40"><rect x="0.8" y="0.8" width="60.400" height="50" rx="1.500" fill="none" stroke="#ec008c" stroke-width="1.400"/><circle cx="47.200" cy="15.300" r="4.500" fill="none" stroke="#ec008c" stroke-width="1.300"/><path d="M4 32.600L20.200 20.600L34 32.600M38.700 32.600L43.700 27.800L48.700 32.600" fill="none" stroke="#ec008c" stroke-width="1.300"/></svg>
</div>
<div style="left:1011px;top:156px;width:17.2px;height:472px;background:#5a5a5a;"></div>
<div style="left:1028.2px;top:118px;width:1.8px;height:572px;background:#2b2b2b;"></div>
<div style="left:1030px;top:120px;width:1.2px;height:570px;background:#4a4a4a;"></div>
<div style="left:1011px;top:157px;width:17px;height:17px;background:#f3f3f3;"></div>
<svg class="i" style="left:1011.5px;top:158.3px;" width="16" height="16" viewBox="0 0 16 16"><path d="M4 10L8 6L12 10" fill="none" stroke="#3a3a3a" stroke-width="2"/></svg>
<div style="left:1011px;top:611px;width:17px;height:16.5px;background:#f3f3f3;"></div>
<svg class="i" style="left:1011.5px;top:612.05px;" width="16" height="16" viewBox="0 0 16 16"><path d="M4 6L8 10L12 6" fill="none" stroke="#3a3a3a" stroke-width="2"/></svg>
<div style="left:1011px;top:282px;width:15px;height:155.3px;background:#cdcdcd;border:1px solid #f2f2f2;"></div>
<div style="left:49px;top:628px;width:963px;height:17px;background:#5a5a5a;"></div>
<div style="left:50px;top:628px;width:17px;height:17px;background:#f3f3f3;"></div>
<svg class="i" style="left:50.5px;top:628.5px;" width="16" height="16" viewBox="0 0 16 16"><path d="M10 4L6 8L10 12" fill="none" stroke="#3a3a3a" stroke-width="2"/></svg>
<div style="left:994px;top:628px;width:17px;height:17px;background:#f3f3f3;"></div>
<svg class="i" style="left:994.5px;top:628.5px;" width="16" height="16" viewBox="0 0 16 16"><path d="M6 4L10 8L6 12" fill="none" stroke="#3a3a3a" stroke-width="2"/></svg>
<div style="left:293px;top:628px;width:466px;height:15px;background:#cdcdcd;border:1px solid #f2f2f2;"></div>
<div style="left:1011px;top:628px;width:17.2px;height:17px;background:#333333;"></div>
<svg class="i" style="left:1013px;top:630px;" width="14" height="14" viewBox="0 0 14 14"><circle cx="5.600" cy="5.600" r="4.300" fill="none" stroke="#c8c8c8" stroke-width="1.100"/><path d="M8.800 8.800L12.800 12.800" stroke="#c8c8c8" stroke-width="1.500"/><path d="M5.600 3.600V7.600M3.600 5.600H7.600" stroke="#c8c8c8" stroke-width="0.900"/></svg>
<div style="left:1031.2px;top:118px;width:314px;height:572px;background:#2d2d2d;"></div>
<div style="left:1033px;top:141px;width:312px;height:549px;background:#383838;"></div>
<div style="left:1033px;top:140px;width:312px;height:1px;background:#0e0e0e;"></div>
<span class="t" style="left:1039px;top:121.0px;font-size:12.5px;line-height:16px;color:#e6e6e6;transform-origin:0 50%;transform:scaleX(0.9550);">Export</span>
<svg class="i" style="left:1310px;top:124px;" width="10" height="9" viewBox="0 0 10 9"><path d="M0 0L4.500 4.500L0 9ZM5 0L9.500 4.500L5 9Z" fill="#8a8a8a"/></svg>
<svg class="i" style="left:1329.5px;top:124.3px;" width="8" height="8" viewBox="0 0 8 8"><path d="M0.500 0.500L7.500 7.500M7.500 0.500L0.500 7.500" stroke="#8a8a8a" stroke-width="1.400"/></svg>
<div style="left:1077px;top:150px;width:148px;height:21.5px;background:#2d2d2d;border:1px solid #070707;"></div>
<div class="clip" style="left:1079px;top:151px;width:146.500px;height:21px;">
<span class="t" style="left:2.4px;top:3.5px;font-size:12.3px;line-height:15px;color:#e6e6e6;transform-origin:0 50%;transform:scaleX(0.9450);">Nesabamedia</span>
</div>
<span class="t" style="left:1040.8px;top:158.6px;font-size:5.8px;line-height:7px;color:#ee2a8f;transform-origin:0 50%;transform:scaleX(0.6498);font-weight:bold;">Nesabamedia</span>
<div style="left:1046px;top:193px;width:11px;height:11px;background:#2b2b2b;border:1px solid #050505;"></div>
<svg class="i" style="left:1047.5px;top:195px;" width="10" height="9" viewBox="0 0 10 9"><path d="M1.200 4.600L4 7.400L8.800 1.200" fill="none" stroke="#f2f2f2" stroke-width="1.800"/></svg>
<div style="left:1077px;top:187.3px;width:68px;height:21.5px;background:#2d2d2d;border:1px solid #070707;"></div>
<span class="t" style="left:1081.4px;top:192.0px;font-size:12.3px;line-height:15px;color:#6a6a6a;transform-origin:0 50%;transform:scaleX(0.9332);">Suffix</span>
<div style="left:1152px;top:187.3px;width:58px;height:21.5px;background:#2d2d2d;border:1px solid #070707;"></div>
<span class="t" style="left:1155.8px;top:192.0px;font-size:12.3px;line-height:15px;color:#e6e6e6;transform-origin:0 50%;transform:scaleX(0.7943);">JPG</span>
<svg class="i" style="left:1199.5px;top:196.75px;" width="8" height="4.5" viewBox="0 0 8 4.5"><path d="M0 0H8L4.0 4.5Z" fill="#9a9a9a"/></svg>
<svg class="i" style="left:1220.5px;top:190.5px;" width="17" height="17" viewBox="0 0 16 16"><path d="M6.9 0H9.1L9.6 2.1L11 2.7L12.9 1.6L14.4 3.1L13.3 5L13.9 6.4L16 6.9V9.1L13.9 9.6L13.3 11L14.4 12.9L12.9 14.4L11 13.3L9.6 13.9L9.1 16H6.9L6.4 13.9L5 13.3L3.1 14.4L1.6 12.9L2.7 11L2.1 9.6L0 9.1V6.9L2.1 6.4L2.7 5L1.6 3.1L3.1 1.6L5 2.7L6.4 2.1Z" fill="#d6d6d6"/><circle cx="8" cy="8" r="3.6" fill="#383838"/></svg>
<svg class="i" style="left:1251px;top:191px;" width="14" height="16" viewBox="0 0 14 16"><path d="M0 2.200H14V3.800H0ZM4.600 0H9.400V2.200H4.600Z" fill="#d6d6d6"/><path d="M1.300 5H12.700L11.800 16H2.200Z" fill="#d6d6d6"/><path d="M5.200 6.600V14M8.800 6.600V14" stroke="#383838" stroke-width="1.300"/></svg>
<svg class="i" style="left:1278px;top:197px;" width="18" height="4" viewBox="0 0 18 4"><circle cx="2" cy="2" r="1.800" fill="#d6d6d6"/><circle cx="8.300" cy="2" r="1.800" fill="#d6d6d6"/><circle cx="14.600" cy="2" r="1.800" fill="#d6d6d6"/></svg>
<svg class="i" style="left:1293px;top:205px;" width="4" height="4" viewBox="0 0 4 4"><path d="M4 0V4H0Z" fill="#8f8f8f"/></svg>
<span class="t" style="left:1077.5px;top:216.5px;font-size:12.3px;line-height:15px;color:#e6e6e6;transform-origin:0 50%;transform:scaleX(0.8998);">100% @ 300 dpi</span>
<div style="left:1043px;top:245px;width:279px;height:1px;background:#0c0c0c;"></div>
<div style="left:1077px;top:260px;width:148px;height:21.5px;background:#2d2d2d;border:1px solid #070707;"></div>
<div class="clip" style="left:1079px;top:261px;width:146.500px;height:21px;">
<span class="t" style="left:2.4px;top:3.5px;font-size:12.3px;line-height:15px;color:#e6e6e6;transform-origin:0 50%;transform:scaleX(0.9450);">Best Free Software Download</span>
</div>
<span class="t" style="left:1040.8px;top:269.0px;font-size:4.2px;line-height:5px;color:#d4d4da;transform-origin:0 50%;transform:scaleX(0.4083);font-weight:bold;">Best Free Software Download</span>
<div style="left:1046px;top:303px;width:11px;height:11px;background:#2b2b2b;border:1px solid #050505;"></div>
<svg class="i" style="left:1047.5px;top:305px;" width="10" height="9" viewBox="0 0 10 9"><path d="M1.200 4.600L4 7.400L8.800 1.200" fill="none" stroke="#f2f2f2" stroke-width="1.800"/></svg>
<div style="left:1077px;top:297.3px;width:68px;height:21.5px;background:#2d2d2d;border:1px solid #070707;"></div>
<span class="t" style="left:1081.4px;top:302.0px;font-size:12.3px;line-height:15px;color:#6a6a6a;transform-origin:0 50%;transform:scaleX(0.9332);">Suffix</span>
<div style="left:1152px;top:297.3px;width:58px;height:21.5px;background:#2d2d2d;border:1px solid #070707;"></div>
<span class="t" style="left:1155.8px;top:302.0px;font-size:12.3px;line-height:15px;color:#e6e6e6;transform-origin:0 50%;transform:scaleX(0.7943);">JPG</span>
<svg class="i" style="left:1199.5px;top:306.75px;" width="8" height="4.5" viewBox="0 0 8 4.5"><path d="M0 0H8L4.0 4.5Z" fill="#9a9a9a"/></svg>
<svg class="i" style="left:1220.5px;top:300.5px;" width="17" height="17" viewBox="0 0 16 16"><path d="M6.9 0H9.1L9.6 2.1L11 2.7L12.9 1.6L14.4 3.1L13.3 5L13.9 6.4L16 6.9V9.1L13.9 9.6L13.3 11L14.4 12.9L12.9 14.4L11 13.3L9.6 13.9L9.1 16H6.9L6.4 13.9L5 13.3L3.1 14.4L1.6 12.9L2.7 11L2.1 9.6L0 9.1V6.9L2.1 6.4L2.7 5L1.6 3.1L3.1 1.6L5 2.7L6.4 2.1Z" fill="#d6d6d6"/><circle cx="8" cy="8" r="3.6" fill="#383838"/></svg>
<svg class="i" style="left:1251px;top:301px;" width="14" height="16" viewBox="0 0 14 16"><path d="M0 2.200H14V3.800H0ZM4.600 0H9.400V2.200H4.600Z" fill="#d6d6d6"/><path d="M1.300 5H12.700L11.800 16H2.200Z" fill="#d6d6d6"/><path d="M5.200 6.600V14M8.800 6.600V14" stroke="#383838" stroke-width="1.300"/></svg>
<svg class="i" style="left:1278px;top:307px;" width="18" height="4" viewBox="0 0 18 4"><circle cx="2" cy="2" r="1.800" fill="#d6d6d6"/><circle cx="8.300" cy="2" r="1.800" fill="#d6d6d6"/><circle cx="14.600" cy="2" r="1.800" fill="#d6d6d6"/></svg>
<svg class="i" style="left:1293px;top:315px;" width="4" height="4" viewBox="0 0 4 4"><path d="M4 0V4H0Z" fill="#8f8f8f"/></svg>
<span class="t" style="left:1077.5px;top:326.5px;font-size:12.3px;line-height:15px;color:#e6e6e6;transform-origin:0 50%;transform:scaleX(0.8998);">100% @ 300 dpi</span>
<div style="left:1043px;top:355px;width:279px;height:1px;background:#0c0c0c;"></div>
<div style="left:1077px;top:370px;width:148px;height:21.5px;background:#2d2d2d;border:1px solid #070707;"></div>
<div class="clip" style="left:1079px;top:371px;width:146.500px;height:21px;">
<span class="t" style="left:2.4px;top:3.5px;font-size:12.3px;line-height:15px;color:#e6e6e6;transform-origin:0 50%;transform:scaleX(0.9450);">PowerClip Curve</span>
</div>
<svg class="i" style="left:1040px;top:369.5px;overflow:hidden;" width="24" height="24.4" viewBox="0 0 24 24.4"><path d="M0.900 4.300L9.100 13.400L0.900 22.700Z" fill="#5a55a8"/><path d="M9.400 2.900L19.600 13.400L7 26" fill="none" stroke="#ee2a8f" stroke-width="5.400" stroke-linecap="round" stroke-linejoin="round"/></svg>
<div style="left:1046px;top:413px;width:11px;height:11px;background:#2b2b2b;border:1px solid #050505;"></div>
<svg class="i" style="left:1047.5px;top:415px;" width="10" height="9" viewBox="0 0 10 9"><path d="M1.200 4.600L4 7.400L8.800 1.200" fill="none" stroke="#f2f2f2" stroke-width="1.800"/></svg>
<div style="left:1077px;top:407.3px;width:68px;height:21.5px;background:#2d2d2d;border:1px solid #070707;"></div>
<span class="t" style="left:1081.4px;top:412.0px;font-size:12.3px;line-height:15px;color:#6a6a6a;transform-origin:0 50%;transform:scaleX(0.9332);">Suffix</span>
<div style="left:1152px;top:407.3px;width:58px;height:21.5px;background:#2d2d2d;border:1px solid #070707;"></div>
<span class="t" style="left:1155.8px;top:412.0px;font-size:12.3px;line-height:15px;color:#e6e6e6;transform-origin:0 50%;transform:scaleX(0.7943);">JPG</span>
<svg class="i" style="left:1199.5px;top:416.75px;" width="8" height="4.5" viewBox="0 0 8 4.5"><path d="M0 0H8L4.0 4.5Z" fill="#9a9a9a"/></svg>
<svg class="i" style="left:1220.5px;top:410.5px;" width="17" height="17" viewBox="0 0 16 16"><path d="M6.9 0H9.1L9.6 2.1L11 2.7L12.9 1.6L14.4 3.1L13.3 5L13.9 6.4L16 6.9V9.1L13.9 9.6L13.3 11L14.4 12.9L12.9 14.4L11 13.3L9.6 13.9L9.1 16H6.9L6.4 13.9L5 13.3L3.1 14.4L1.6 12.9L2.7 11L2.1 9.6L0 9.1V6.9L2.1 6.4L2.7 5L1.6 3.1L3.1 1.6L5 2.7L6.4 2.1Z" fill="#d6d6d6"/><circle cx="8" cy="8" r="3.6" fill="#383838"/></svg>
<svg class="i" style="left:1251px;top:411px;" width="14" height="16" viewBox="0 0 14 16"><path d="M0 2.200H14V3.800H0ZM4.600 0H9.400V2.200H4.600Z" fill="#d6d6d6"/><path d="M1.300 5H12.700L11.800 16H2.200Z" fill="#d6d6d6"/><path d="M5.200 6.600V14M8.800 6.600V14" stroke="#383838" stroke-width="1.300"/></svg>
<svg class="i" style="left:1278px;top:417px;" width="18" height="4" viewBox="0 0 18 4"><circle cx="2" cy="2" r="1.800" fill="#d6d6d6"/><circle cx="8.300" cy="2" r="1.800" fill="#d6d6d6"/><circle cx="14.600" cy="2" r="1.800" fill="#d6d6d6"/></svg>
<svg class="i" style="left:1293px;top:425px;" width="4" height="4" viewBox="0 0 4 4"><path d="M4 0V4H0Z" fill="#8f8f8f"/></svg>
<span class="t" style="left:1077.5px;top:436.5px;font-size:12.3px;line-height:15px;color:#e6e6e6;transform-origin:0 50%;transform:scaleX(0.8998);">100% @ 300 dpi</span>
<div style="left:1043px;top:653px;width:279px;height:1px;background:#0c0c0c;"></div>
<svg class="i" style="left:1046px;top:664px;" width="18" height="18" viewBox="0 0 18 18"><rect x="0.700" y="5.200" width="11" height="11.400" fill="none" stroke="#d6d6d6" stroke-width="1.300"/><path d="M6.200 15V9" stroke="#d6d6d6" stroke-width="1.700"/><path d="M3.300 10.800H9.100L6.200 7.200Z" fill="#d6d6d6"/><rect x="8.800" y="0" width="7.400" height="7.400" fill="#35d268"/><path d="M12.500 1.300V6.100M10.100 3.700H14.900" stroke="#0c3d18" stroke-width="1.200"/></svg>
<div style="left:1071px;top:660.4px;width:58px;height:21.4px;background:#2d2d2d;border:1px solid #070707;"></div>
<span class="t" style="left:1075px;top:665.0px;font-size:12.3px;line-height:15px;color:#e6e6e6;transform-origin:0 50%;transform:scaleX(0.7943);">JPG</span>
<svg class="i" style="left:1118.5px;top:669.75px;" width="8" height="4.5" viewBox="0 0 8 4.5"><path d="M0 0H8L4.0 4.5Z" fill="#9a9a9a"/></svg>
<svg class="i" style="left:1139.5px;top:664.5px;" width="17" height="16" viewBox="0 0 17 16"><rect x="0.600" y="0.600" width="5.600" height="5.600" fill="none" stroke="#d6d6d6" stroke-width="1.100"/><rect x="0.600" y="9.400" width="5.600" height="5.600" fill="none" stroke="#d6d6d6" stroke-width="1.100"/><path d="M1.800 3.400L3 4.600L5 2.200M1.800 12.200L3 13.400L5 11" fill="none" stroke="#1fc24a" stroke-width="1.200"/><path d="M9 3.400H16M9 12.200H16" stroke="#d6d6d6" stroke-width="1.200"/></svg>
<svg class="i" style="left:1170.5px;top:664px;" width="14" height="16" viewBox="0 0 14 16"><path d="M0 2.200H14V3.800H0ZM4.600 0H9.400V2.200H4.600Z" fill="#d6d6d6"/><path d="M1.300 5H12.700L11.800 16H2.200Z" fill="#d6d6d6"/><path d="M5.200 6.600V14M8.800 6.600V14" stroke="#383838" stroke-width="1.300"/></svg>
<svg class="i" style="left:1211.5px;top:664px;" width="17" height="16" viewBox="0 0 17 16"><path d="M0.800 15V1.500H6L7.500 3.200H13V6" fill="#d6d6d6" stroke="#d6d6d6" stroke-width="1.400" stroke-linejoin="round"/><path d="M3.400 6.200H16.200L13.600 15.200H0.800Z" fill="#383838" stroke="#d6d6d6" stroke-width="1.500" stroke-linejoin="round"/></svg>
<div style="left:1236px;top:660.4px;width:78px;height:21.4px;background:#2d2d2d;border:1px solid #070707;"></div>
<span class="t" style="left:1258.5px;top:665.0px;font-size:12.3px;line-height:15px;color:#e6e6e6;transform-origin:0 50%;transform:scaleX(0.9565);">Export</span>
<div style="left:1325px;top:140px;width:20px;height:550px;background:#2b2b2b;"></div>
<div style="left:1325px;top:140px;width:20px;height:272px;background:#454545;"></div>
<div style="left:1324px;top:140.5px;width:1.3px;height:549.5px;background:#2e8fee;"></div>
<div style="left:1345px;top:118px;width:1.2px;height:572px;background:#050505;"></div>
<svg class="i" style="left:1327px;top:144px;" width="16" height="16" viewBox="0 0 16 16"><path d="M1.800 6.400V12.400Q8 17 14.200 12.400V6.400L8.300 9.200Z" fill="#d6d6d6"/><path d="M0.400 4.200L8 0.800L15.600 4.200L8.400 7.800Z" fill="#d6d6d6" stroke="#454545" stroke-width="0.500"/><path d="M8.400 4.400L11.600 5.800V12" fill="none" stroke="#3a3a3a" stroke-width="1.100"/></svg>
<span class="t" style="left:1340.2px;top:166px;font-size:12.3px;line-height:15px;color:#e0e0e0;letter-spacing:-0.491px;transform-origin:0 0;transform:rotate(90deg);">Learn</span>
<div style="left:1325px;top:216.6px;width:20px;height:1px;background:#1e1e1e;"></div>
<svg class="i" style="left:1327px;top:221px;" width="17" height="18" viewBox="0 0 17 18"><path d="M5.600 1L11.600 7L6.400 12.200L0.800 6.600Z" fill="none" stroke="#d6d6d6" stroke-width="1.200"/><path d="M3.600 6.800H9.200L6.400 9.600Z" fill="#f26a1b"/><path d="M9 11H16.400M9 13.500H16.400M9 16H16.400" stroke="#d6d6d6" stroke-width="1.100"/><path d="M5.600 1L2.600 1" stroke="#d6d6d6" stroke-width="1.100"/></svg>
<span class="t" style="left:1340.2px;top:245px;font-size:12.3px;line-height:15px;color:#e0e0e0;letter-spacing:-0.506px;transform-origin:0 0;transform:rotate(90deg);">Properties</span>
<div style="left:1325px;top:318px;width:20px;height:1px;background:#1e1e1e;"></div>
<svg class="i" style="left:1327px;top:323px;" width="16" height="18" viewBox="0 0 16 18"><path d="M8 6.800L15.400 11.200L8 15.600L0.600 11.200Z" fill="#9a9a9a" stroke="#d6d6d6" stroke-width="1.100"/><path d="M8 0.800L15.400 5.200L8 9.600L0.600 5.200Z" fill="#454545" stroke="#d6d6d6" stroke-width="1.200"/></svg>
<span class="t" style="left:1340.2px;top:347px;font-size:12.3px;line-height:15px;color:#e0e0e0;letter-spacing:-0.528px;transform-origin:0 0;transform:rotate(90deg);">Objects</span>
<div style="left:1325px;top:412px;width:20px;height:82px;background:#1064d3;"></div>
<svg class="i" style="left:1327px;top:417px;" width="15" height="16" viewBox="0 0 15 16"><path d="M3.800 0.800H0.800V15.200H14.200V0.800H11.200" fill="none" stroke="#fff" stroke-width="1.400"/><path d="M7.500 5V12.500" stroke="#fff" stroke-width="1.800"/><path d="M4.300 6.600H10.700L7.500 2.400Z" fill="#fff"/></svg>
<span class="t" style="left:1340.2px;top:438px;font-size:12.3px;line-height:15px;color:#f0f0f0;letter-spacing:-0.258px;transform-origin:0 0;transform:rotate(90deg);">Export</span>
<svg class="i" style="left:1329px;top:500.5px;" width="11" height="11" viewBox="0 0 11 11"><path d="M5.500 0V11M0 5.500H11" stroke="#7a7a7a" stroke-width="1.500"/></svg>
<div style="left:1346.5px;top:118px;width:20px;height:572px;background:#383838;"></div>
<svg class="i" style="left:1348px;top:119px;" width="16" height="6" viewBox="0 0 16 6"><rect x="1" y="0" width="1" height="1" fill="#5c5c5c"/><rect x="3" y="0" width="1" height="1" fill="#5c5c5c"/><rect x="5" y="0" width="1" height="1" fill="#5c5c5c"/><rect x="7" y="0" width="1" height="1" fill="#5c5c5c"/><rect x="9" y="0" width="1" height="1" fill="#5c5c5c"/><rect x="11" y="0" width="1" height="1" fill="#5c5c5c"/><rect x="13" y="0" width="1" height="1" fill="#5c5c5c"/><rect x="15" y="0" width="1" height="1" fill="#5c5c5c"/><rect x="1" y="2" width="1" height="1" fill="#5c5c5c"/><rect x="3" y="2" width="1" height="1" fill="#5c5c5c"/><rect x="5" y="2" width="1" height="1" fill="#5c5c5c"/><rect x="7" y="2" width="1" height="1" fill="#5c5c5c"/><rect x="9" y="2" width="1" height="1" fill="#5c5c5c"/><rect x="11" y="2" width="1" height="1" fill="#5c5c5c"/><rect x="13" y="2" width="1" height="1" fill="#5c5c5c"/><rect x="15" y="2" width="1" height="1" fill="#5c5c5c"/><rect x="1" y="4" width="1" height="1" fill="#5c5c5c"/><rect x="3" y="4" width="1" height="1" fill="#5c5c5c"/><rect x="5" y="4" width="1" height="1" fill="#5c5c5c"/><rect x="7" y="4" width="1" height="1" fill="#5c5c5c"/><rect x="9" y="4" width="1" height="1" fill="#5c5c5c"/><rect x="11" y="4" width="1" height="1" fill="#5c5c5c"/><rect x="13" y="4" width="1" height="1" fill="#5c5c5c"/><rect x="15" y="4" width="1" height="1" fill="#5c5c5c"/></svg>
<svg class="i" style="left:1352px;top:131px;" width="5" height="8" viewBox="0 0 5 8"><path d="M0 0L5 4L0 8Z" fill="#8a8a8a"/></svg>
<svg class="i" style="left:1349px;top:149px;" width="14" height="16" viewBox="0 0 14 16"><path d="M1.200 14.800L9.500 6.500" stroke="#4f4f4f" stroke-width="2.400" stroke-linecap="round"/><path d="M7.800 4.200L11.400 7.800" stroke="#4f4f4f" stroke-width="1.600"/><path d="M10 5.600L12.600 3" stroke="#4f4f4f" stroke-width="4" stroke-linecap="round"/></svg>
<svg class="i" style="left:1350px;top:170px;" width="12" height="7" viewBox="0 0 12 7"><path d="M1 6L6 1L11 6" fill="none" stroke="#4f4f4f" stroke-width="1.600"/></svg>
<div style="left:1347.5px;top:183px;width:17px;height:16px;background:#ffffff;"></div>
<div style="left:1347.5px;top:200px;width:17px;height:16px;background:#231f20;"></div>
<div style="left:1347.5px;top:217px;width:17px;height:16px;background:#414042;"></div>
<div style="left:1347.5px;top:234px;width:17px;height:16px;background:#58595b;"></div>
<div style="left:1347.5px;top:251px;width:17px;height:16px;background:#6d6e71;"></div>
<div style="left:1347.5px;top:268px;width:17px;height:16px;background:#808285;"></div>
<div style="left:1347.5px;top:285px;width:17px;height:16px;background:#939598;"></div>
<div style="left:1347.5px;top:302px;width:17px;height:16px;background:#a7a9ac;"></div>
<div style="left:1347.5px;top:319px;width:17px;height:16px;background:#bcbec0;"></div>
<div style="left:1347.5px;top:336px;width:17px;height:16px;background:#d1d3d4;"></div>
<div style="left:1347.5px;top:353px;width:17px;height:16px;background:#e6e7e8;"></div>
<div style="left:1347.5px;top:370px;width:17px;height:16px;background:#ffffff;"></div>
<div style="left:1347.5px;top:387px;width:17px;height:16px;background:#2e3192;"></div>
<div style="left:1347.5px;top:404px;width:17px;height:16px;background:#00aeef;"></div>
<div style="left:1347.5px;top:421px;width:17px;height:16px;background:#00a651;"></div>
<div style="left:1347.5px;top:438px;width:17px;height:16px;background:#fff200;"></div>
<div style="left:1347.5px;top:455px;width:17px;height:16px;background:#ed1c24;"></div>
<div style="left:1347.5px;top:472px;width:17px;height:16px;background:#ec008c;"></div>
<div style="left:1347.5px;top:489px;width:17px;height:16px;background:#a3407f;"></div>
<div style="left:1347.5px;top:506px;width:17px;height:16px;background:#f58220;"></div>
<div style="left:1347.5px;top:523px;width:17px;height:16px;background:#f9b0b0;"></div>
<div style="left:1347.5px;top:540px;width:17px;height:16px;background:#7b675f;"></div>
<div style="left:1347.5px;top:557px;width:17px;height:16px;background:#d0cce8;"></div>
<div style="left:1347.5px;top:574px;width:17px;height:16px;background:#a29bd0;"></div>
<div style="left:1347.5px;top:591px;width:17px;height:16px;background:#6b8bc9;"></div>
<div style="left:1347.5px;top:608px;width:17px;height:16px;background:#7670b8;"></div>
<div style="left:1347.5px;top:625px;width:17px;height:16px;background:#8781b0;"></div>
<div style="left:1347.5px;top:642px;width:17px;height:6.5px;background:#3f5d8f;"></div>
<svg class="i" style="left:1347.5px;top:183px;" width="17" height="17" viewBox="0 0 17 17"><path d="M1.500 15.500L15.500 1.500" stroke="#e8323c" stroke-width="1.100"/></svg>
<svg class="i" style="left:1351px;top:653px;" width="10" height="7" viewBox="0 0 10 7"><path d="M0.800 0.800L5 5.600L9.200 0.800" fill="none" stroke="#6e6e6e" stroke-width="1.600"/></svg>
<svg class="i" style="left:1352px;top:670.5px;" width="9" height="8" viewBox="0 0 9 8"><path d="M0.800 0.500L4 4L0.800 7.500M5 0.500L8.200 4L5 7.500" fill="none" stroke="#6e6e6e" stroke-width="1.200"/></svg>
<div style="left:32px;top:645px;width:997px;height:24px;background:#383838;"></div>
<div style="left:32px;top:645px;width:997px;height:1px;background:#161616;"></div>
<div style="left:32px;top:669px;width:997px;height:1px;background:#0c0c0c;"></div>
<svg class="i" style="left:38.5px;top:652px;" width="9.5" height="9.5" viewBox="0 0 9.5 9.5"><path d="M4.750 0V9.500M0 4.750H9.500" stroke="#dcdcdc" stroke-width="1.300"/></svg>
<svg class="i" style="left:60.7px;top:651.5px;" width="11" height="10" viewBox="0 0 11 10"><path d="M0.700 0V10" stroke="#dcdcdc" stroke-width="1.400"/><path d="M10.300 0V10L2.600 5Z" fill="#dcdcdc"/></svg>
<svg class="i" style="left:85.6px;top:651.5px;" width="8" height="10" viewBox="0 0 8 10"><path d="M8 0V10L0 5Z" fill="#dcdcdc"/></svg>
<span class="t" style="left:107.6px;top:650.5px;font-size:12.3px;line-height:15px;color:#a0a0a0;transform-origin:0 50%;transform:scaleX(1.0095);">6-7  of  8</span>
<svg class="i" style="left:172.6px;top:651.5px;" width="8" height="10" viewBox="0 0 8 10"><path d="M0 0V10L8 5Z" fill="#dcdcdc"/></svg>
<svg class="i" style="left:194.5px;top:651.5px;" width="11" height="10" viewBox="0 0 11 10"><path d="M10.300 0V10" stroke="#dcdcdc" stroke-width="1.400"/><path d="M0.700 0V10L8.400 5Z" fill="#dcdcdc"/></svg>
<svg class="i" style="left:217px;top:652px;" width="9.5" height="9.5" viewBox="0 0 9.5 9.5"><path d="M4.750 0V9.500M0 4.750H9.500" stroke="#dcdcdc" stroke-width="1.300"/></svg>
<div style="left:234px;top:646px;width:1px;height:23px;background:#0c0c0c;"></div>
<div style="left:334px;top:646px;width:1px;height:23px;background:#0c0c0c;"></div>
<div style="left:435px;top:646px;width:1px;height:23px;background:#0c0c0c;"></div>
<div style="left:738px;top:646px;width:1px;height:23px;background:#0c0c0c;"></div>
<div style="left:537.5px;top:646px;width:100px;height:23px;background:#474747;"></div>
<span class="t" style="left:266.3px;top:650.8px;font-size:12.3px;line-height:15px;color:#dcdcdc;transform-origin:0 50%;transform:scaleX(0.8876);">Page 1</span>
<span class="t" style="left:361.5px;top:650.8px;font-size:12.3px;line-height:15px;color:#dcdcdc;transform-origin:0 50%;transform:scaleX(0.9255);">Page 2-3</span>
<span class="t" style="left:463px;top:650.8px;font-size:12.3px;line-height:15px;color:#dcdcdc;transform-origin:0 50%;transform:scaleX(0.9255);">Page 4-5</span>
<span class="t" style="left:563.7px;top:650.8px;font-size:12.3px;line-height:15px;color:#dcdcdc;transform-origin:0 50%;transform:scaleX(0.9396);">Page 6-7</span>
<span class="t" style="left:670.4px;top:650.8px;font-size:12.3px;line-height:15px;color:#dcdcdc;transform-origin:0 50%;transform:scaleX(0.8927);">Page 8</span>
<div style="left:32px;top:670px;width:997px;height:20px;background:#383838;"></div>
<svg class="i" style="left:35px;top:672px;" width="6" height="17" viewBox="0 0 6 17"><rect x="0" y="0" width="1" height="1" fill="#5c5c5c"/><rect x="4" y="0" width="1" height="1" fill="#5c5c5c"/><rect x="2" y="2" width="1" height="1" fill="#5c5c5c"/><rect x="6" y="2" width="1" height="1" fill="#5c5c5c"/><rect x="0" y="4" width="1" height="1" fill="#5c5c5c"/><rect x="4" y="4" width="1" height="1" fill="#5c5c5c"/><rect x="2" y="6" width="1" height="1" fill="#5c5c5c"/><rect x="6" y="6" width="1" height="1" fill="#5c5c5c"/><rect x="0" y="8" width="1" height="1" fill="#5c5c5c"/><rect x="4" y="8" width="1" height="1" fill="#5c5c5c"/><rect x="2" y="10" width="1" height="1" fill="#5c5c5c"/><rect x="6" y="10" width="1" height="1" fill="#5c5c5c"/><rect x="0" y="12" width="1" height="1" fill="#5c5c5c"/><rect x="4" y="12" width="1" height="1" fill="#5c5c5c"/><rect x="2" y="14" width="1" height="1" fill="#5c5c5c"/><rect x="6" y="14" width="1" height="1" fill="#5c5c5c"/></svg>
<svg class="i" style="left:47px;top:676px;" width="5" height="8" viewBox="0 0 5 8"><path d="M0 0L5 4L0 8Z" fill="#9a9a9a"/></svg>
<svg class="i" style="left:62.5px;top:672.5px;" width="13" height="14" viewBox="0 0 13 14"><path d="M1.200 12.800L8.400 5.600" stroke="#d6d6d6" stroke-width="2.400" stroke-linecap="round"/><path d="M1.200 12.800L3.800 10.200" stroke="#f26a1b" stroke-width="1.400" stroke-linecap="round"/><path d="M6.800 3.600L10.200 7" stroke="#d6d6d6" stroke-width="1.600"/><path d="M8.800 4.800L11.200 2.400" stroke="#d6d6d6" stroke-width="3.800" stroke-linecap="round"/></svg>
<svg class="i" style="left:83.5px;top:675px;" width="7" height="10" viewBox="0 0 7 10"><path d="M6 0.800L1.200 5L6 9.200" fill="none" stroke="#555" stroke-width="1.500"/></svg>
<div style="left:97px;top:671.5px;width:16.5px;height:16.5px;background:#ffffff;"></div>
<svg class="i" style="left:97px;top:671.5px;" width="16.5" height="16.5" viewBox="0 0 16.5 16.5"><path d="M1.500 15L15 1.500" stroke="#e8323c" stroke-width="1.100"/></svg>
<span class="t" style="left:380px;top:672.8px;font-size:12.3px;line-height:15px;color:#666666;transform-origin:0 50%;transform:scaleX(0.9367);font-style:italic;">Drag colors (or objects) here to store these colors with your document</span>
<svg class="i" style="left:990.5px;top:674.5px;" width="7" height="10" viewBox="0 0 7 10"><path d="M1 0.800L5.800 5L1 9.200" fill="none" stroke="#555" stroke-width="1.500"/></svg>
<svg class="i" style="left:1008px;top:676px;" width="9" height="8" viewBox="0 0 9 8"><path d="M0.800 0.500L4 4L0.800 7.500M5 0.500L8.200 4L5 7.500" fill="none" stroke="#5a5a5a" stroke-width="1.200"/></svg>
<div style="left:0px;top:690px;width:1366px;height:1px;background:#0a0a0a;"></div>
<div style="left:0px;top:691px;width:1366px;height:37px;background:#383838;"></div>
<svg class="i" style="left:10.5px;top:700.5px;" width="17" height="17" viewBox="0 0 16 16"><path d="M6.9 0H9.1L9.6 2.1L11 2.7L12.9 1.6L14.4 3.1L13.3 5L13.9 6.4L16 6.9V9.1L13.9 9.6L13.3 11L14.4 12.9L12.9 14.4L11 13.3L9.6 13.9L9.1 16H6.9L6.4 13.9L5 13.3L3.1 14.4L1.6 12.9L2.7 11L2.1 9.6L0 9.1V6.9L2.1 6.4L2.7 5L1.6 3.1L3.1 1.6L5 2.7L6.4 2.1Z" fill="#d6d6d6"/><circle cx="8" cy="8" r="3.6" fill="#383838"/></svg>
<svg class="i" style="left:25.5px;top:716px;" width="4" height="4" viewBox="0 0 4 4"><path d="M4 0V4H0Z" fill="#8f8f8f"/></svg>
<span class="t" style="left:36.4px;top:702.8px;font-size:12.3px;line-height:15px;color:#e6e6e6;transform-origin:0 50%;transform:scaleX(0.9743);">Next click for Drag/Scale; Second click for Rotate/Skew; Dbl-clicking tool selects all objects; Shift+click multi-selects; Alt+click digs</span>
<svg class="i" style="left:879px;top:701.5px;" width="17" height="16" viewBox="0 0 17 16"><path d="M7 0.800L13.600 7.400L7 14L0.800 7.800Z" fill="none" stroke="#d6d6d6" stroke-width="1.200"/><path d="M7 0.800L3.800 0.800" stroke="#d6d6d6" stroke-width="1.100"/><path d="M3.200 8.200H11.400L7 12.400Z" fill="#ee3b49"/><path d="M15.600 9.600V15.400H10.600Z" fill="#ee3b49"/></svg>
<div style="left:898px;top:699px;width:20px;height:20px;background:#ffffff;"></div>
<svg class="i" style="left:898px;top:699px;" width="20" height="20" viewBox="0 0 20 20"><path d="M1 19L19 1" stroke="#e8323c" stroke-width="1.300"/></svg>
<span class="t" style="left:923px;top:702.0px;font-size:12.3px;line-height:15px;color:#e6e6e6;transform-origin:0 50%;transform:scaleX(1.0033);">None</span>
<svg class="i" style="left:1084px;top:701px;" width="10" height="17" viewBox="0 0 10 17"><path d="M5 0.600L8.600 8.600L6.800 12H3.200L1.400 8.600Z" fill="none" stroke="#d6d6d6" stroke-width="1.100"/><path d="M5 1V8" stroke="#d6d6d6" stroke-width="0.900"/><rect x="2.600" y="12.600" width="4.800" height="3.800" fill="none" stroke="#d6d6d6" stroke-width="1.100"/></svg>
<div style="left:1097px;top:699px;width:19px;height:19.5px;background:#231f20;border:1px solid #5a5a5a;"></div>
<span class="t" style="left:1123px;top:702.7px;font-size:12.3px;line-height:15px;color:#e6e6e6;transform-origin:0 50%;transform:scaleX(0.9047);">C:0 M:0 Y:0 K:100  0,500 pt</span>
<div style="left:1328.5px;top:699px;width:1px;height:21px;background:#0c0c0c;"></div>
<svg class="i" style="left:1339px;top:701.5px;" width="17" height="15" viewBox="0 0 17 15"><rect x="0.600" y="0.600" width="15.800" height="10.800" rx="0.800" fill="#e8323c" stroke="#d8d8d8" stroke-width="1.200"/><rect x="1.200" y="1.200" width="14.600" height="4.800" fill="#3fa9e0"/><circle cx="8.500" cy="6" r="2.600" fill="#e8323c" stroke="#fff" stroke-width="0.900"/><path d="M5 14.300H12M8.500 11.500V14" stroke="#d8d8d8" stroke-width="1.300"/></svg>
</body></html>
